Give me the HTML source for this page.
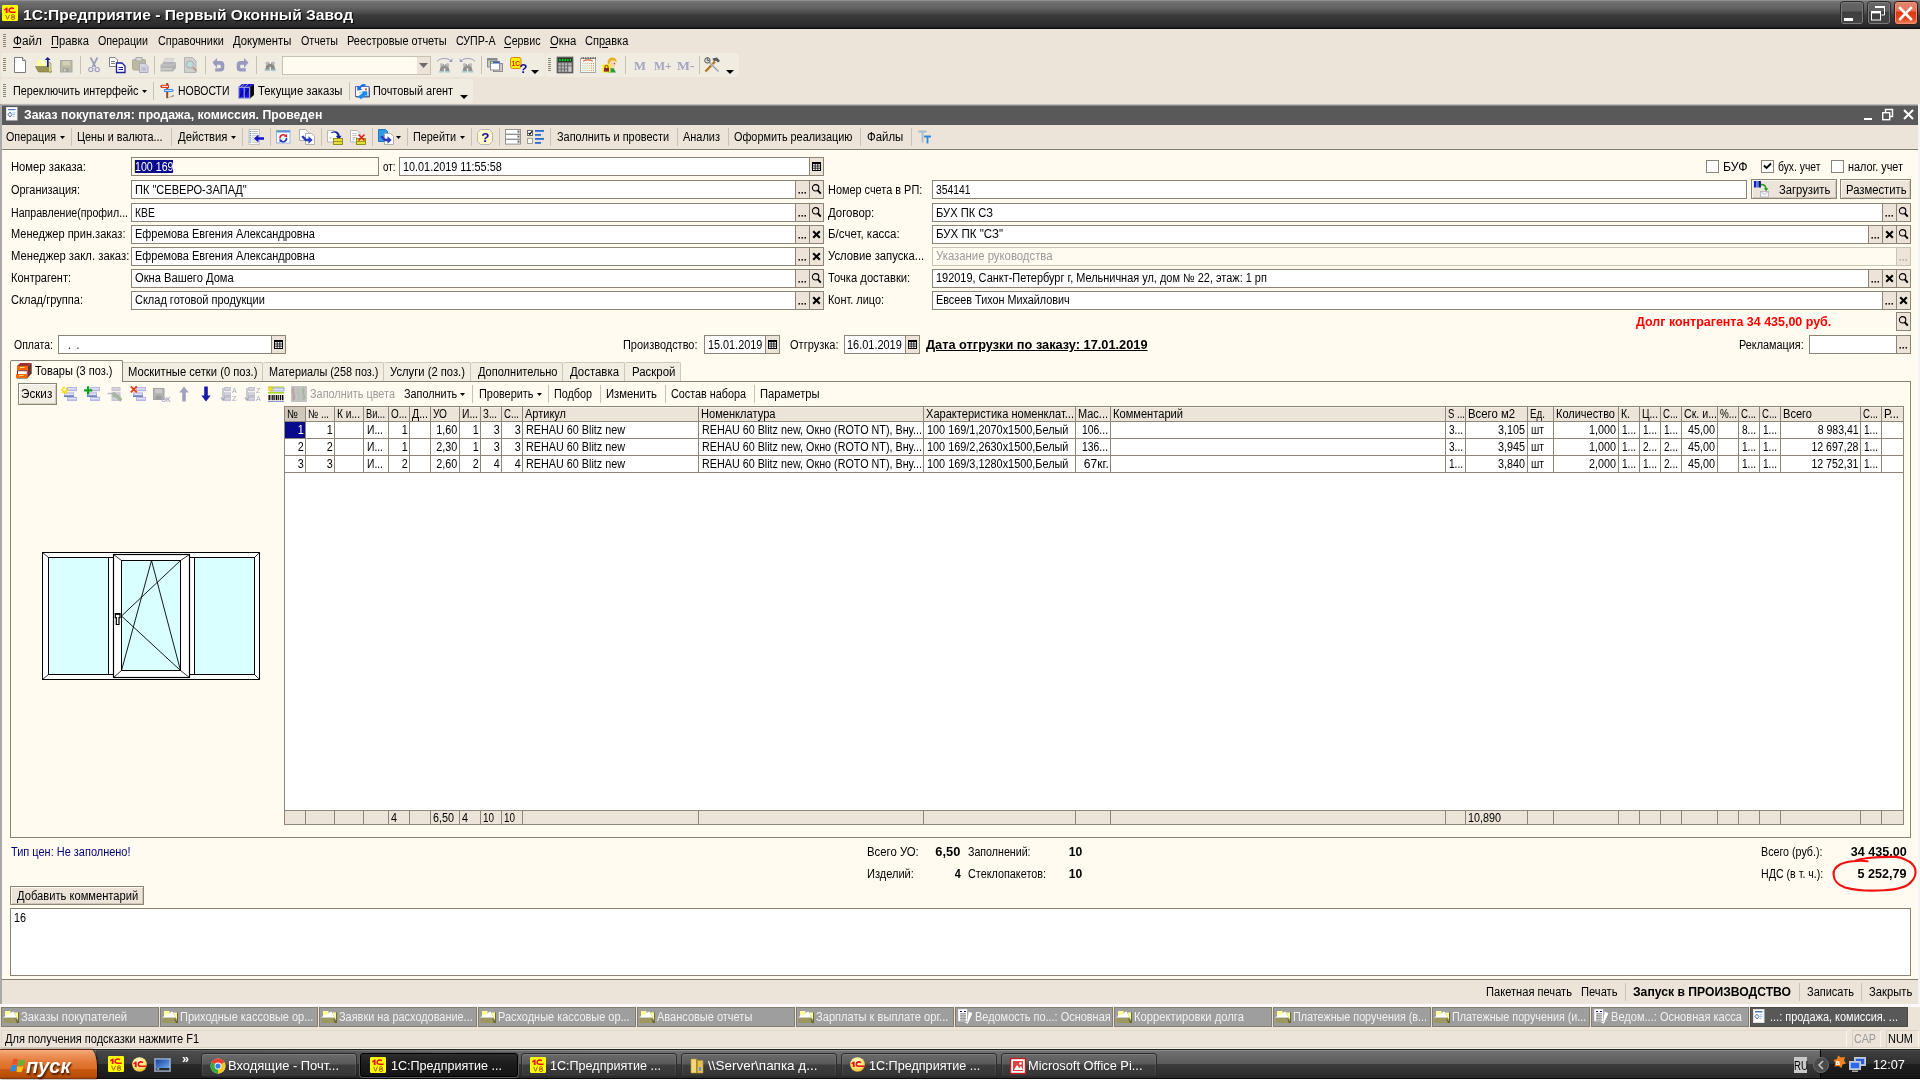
<!DOCTYPE html>
<html><head><meta charset="utf-8"><title>1C</title>
<style>
html,body{margin:0;padding:0;}
body{width:1920px;height:1080px;overflow:hidden;background:#ece4d8;position:relative;font-family:"Liberation Sans",sans-serif;}
#w{position:absolute;left:0;top:0;width:1920px;height:1080px;will-change:transform;}
#w>div,#w>svg,#w>span{position:absolute;}
.t{white-space:pre;display:block;}
svg{overflow:visible;}
</style></head><body><div id="w">
<div style="left:0;top:0;width:1920px;height:28px;background:linear-gradient(#9c9c9c 0,#747474 1.5px,#686868 4px,#626262 8px,#4a4a4a 13px,#3b3b3b 15.5px,#2a2a2a 26px,#1a1a1a 28px);"></div>
<div style="left:0px;top:28px;width:1920px;height:1px;background:#0c0c0c;"></div>
<svg style="left:2px;top:5px" width="16" height="16" viewBox="0 0 16 16"><rect x="0" y="0" width="16" height="16" rx="1.2" fill="#ffff00"/><path d="M2.1 4.300L4.500 2.500H5.600V8H3.700V4.700L2.100 5.400z" fill="#f0101c"/><path d="M12 3.700C9.600 2.300 7.100 3.300 7.100 5.300C7.100 6.800 8.300 7.300 9.800 7.300H13.700" fill="none" stroke="#f0101c" stroke-width="1.500"/><path d="M3.500 9.800L5.500 14.300L7.500 9.800" fill="none" stroke="#b06008" stroke-width="1"/><ellipse cx="11" cy="10.900" rx="1.500" ry="1.200" fill="none" stroke="#b06008" stroke-width="1"/><ellipse cx="11" cy="13.200" rx="1.800" ry="1.300" fill="none" stroke="#b06008" stroke-width="1"/></svg>
<span class="t" style="top:4.5px;font-size:15.5px;line-height:19px;color:#fff;font-weight:bold;left:23px;transform-origin:0 0;transform:scaleX(1.005);text-shadow:1px 1px 1px #000;">1С:Предприятие - Первый Оконный Завод</span>
<div style="left:1840px;top:1px;width:24px;height:24px;border-radius:3.5px;box-sizing:border-box;border:1px solid #2a2a2a;box-shadow:inset 0 0 0 1px #7a7a7a;background:linear-gradient(#666 0,#5e5e5e 9px,#3f3f3f 10px,#444 22px);"></div>
<div style="left:1867px;top:1px;width:24px;height:24px;border-radius:3.5px;box-sizing:border-box;border:1px solid #2a2a2a;box-shadow:inset 0 0 0 1px #7a7a7a;background:linear-gradient(#666 0,#5e5e5e 9px,#3f3f3f 10px,#444 22px);"></div>
<div style="left:1894px;top:1px;width:24px;height:24px;border-radius:3.5px;box-sizing:border-box;border:1px solid #3a1a10;box-shadow:inset 0 0 0 1px #f0907a;background:linear-gradient(#e08a72 0,#df7458 9px,#de3512 10px,#e4451c 17px,#f08a66 22px);"></div>
<div style="left:1844px;top:18px;width:9px;height:3px;background:#fff;"></div>
<svg style="left:1868px;top:3px" width="22" height="22" viewBox="0 0 22 22"><path d="M7.5 4h9v8h-3" fill="none" stroke="#fff" stroke-width="1"/><rect x="7" y="3" width="10" height="2" fill="#fff"/><rect x="3.5" y="9" width="9" height="8" fill="#3f3f3f" stroke="#fff" stroke-width="1"/><rect x="3" y="8" width="10" height="2.4" fill="#fff"/></svg>
<svg style="left:1894px;top:2px" width="23" height="23" viewBox="0 0 23 23"><path d="M5.2 5.2L17.8 18M17.8 5.2L5.2 18" stroke="#fff" stroke-width="2.6"/></svg>
<div style="left:3px;top:34px;width:3px;height:1px;background:#8c8474;"></div>
<div style="left:3px;top:36px;width:3px;height:1px;background:#8c8474;"></div>
<div style="left:3px;top:38px;width:3px;height:1px;background:#8c8474;"></div>
<div style="left:3px;top:40px;width:3px;height:1px;background:#8c8474;"></div>
<div style="left:3px;top:42px;width:3px;height:1px;background:#8c8474;"></div>
<div style="left:3px;top:44px;width:3px;height:1px;background:#8c8474;"></div>
<div style="left:3px;top:46px;width:3px;height:1px;background:#8c8474;"></div>
<span class="t" style="top:33.0px;font-size:12px;line-height:16px;color:#000;left:13px;transform-origin:0 0;transform:scaleX(0.983);">Файл</span>
<span class="t" style="top:33.0px;font-size:12px;line-height:16px;color:#000;left:51.25px;transform-origin:0 0;transform:scaleX(0.937);">Правка</span>
<span class="t" style="top:33.0px;font-size:12px;line-height:16px;color:#000;left:98.25px;transform-origin:0 0;transform:scaleX(0.891);">Операции</span>
<span class="t" style="top:33.0px;font-size:12px;line-height:16px;color:#000;left:157.5px;transform-origin:0 0;transform:scaleX(0.904);">Справочники</span>
<span class="t" style="top:33.0px;font-size:12px;line-height:16px;color:#000;left:233px;transform-origin:0 0;transform:scaleX(0.942);">Документы</span>
<span class="t" style="top:33.0px;font-size:12px;line-height:16px;color:#000;left:300.5px;transform-origin:0 0;transform:scaleX(0.892);">Отчеты</span>
<span class="t" style="top:33.0px;font-size:12px;line-height:16px;color:#000;left:346.5px;transform-origin:0 0;transform:scaleX(0.913);">Реестровые отчеты</span>
<span class="t" style="top:33.0px;font-size:12px;line-height:16px;color:#000;left:455.5px;transform-origin:0 0;transform:scaleX(0.887);">СУПР-А</span>
<span class="t" style="top:33.0px;font-size:12px;line-height:16px;color:#000;left:504.25px;transform-origin:0 0;transform:scaleX(0.888);">Сервис</span>
<span class="t" style="top:33.0px;font-size:12px;line-height:16px;color:#000;left:550px;transform-origin:0 0;transform:scaleX(0.941);">Окна</span>
<span class="t" style="top:33.0px;font-size:12px;line-height:16px;color:#000;left:585px;transform-origin:0 0;transform:scaleX(0.919);">Справка</span>
<div style="left:13px;top:47px;width:8px;height:1px;background:#000;"></div>
<div style="left:51px;top:47px;width:7px;height:1px;background:#000;"></div>
<div style="left:504px;top:47px;width:7px;height:1px;background:#000;"></div>
<div style="left:550px;top:47px;width:7px;height:1px;background:#000;"></div>
<div style="left:602px;top:47px;width:6px;height:1px;background:#000;"></div>
<div style="left:1px;top:53px;width:544px;height:24px;background:#f1ece2;border-radius:3px;"></div>
<div style="left:546px;top:53px;width:193px;height:24px;background:#f1ece2;border-radius:3px;"></div>
<div style="left:3px;top:58px;width:3px;height:1px;background:#8c8474;"></div>
<div style="left:3px;top:60px;width:3px;height:1px;background:#8c8474;"></div>
<div style="left:3px;top:62px;width:3px;height:1px;background:#8c8474;"></div>
<div style="left:3px;top:64px;width:3px;height:1px;background:#8c8474;"></div>
<div style="left:3px;top:66px;width:3px;height:1px;background:#8c8474;"></div>
<div style="left:3px;top:68px;width:3px;height:1px;background:#8c8474;"></div>
<div style="left:3px;top:70px;width:3px;height:1px;background:#8c8474;"></div>
<svg style="left:13px;top:57px" width="14" height="16" viewBox="0 0 14 16"><path d="M1.5 0.5h8l3 3v12h-11z" fill="#fff" stroke="#7d7d7d"/><path d="M9.5 0.5v3h3" fill="#e8e8e8" stroke="#7d7d7d"/></svg>
<svg style="left:35px;top:57px" width="17" height="16" viewBox="0 0 17 16"><path d="M2 3h6l2 2v4H2z" fill="#ffff99"/><path d="M5 3l4 2v3" fill="#fff"/><path d="M0.5 9.5h13l3 5.5H3.5z" fill="#9a9557" stroke="#77733a" stroke-width=".6"/><path d="M13.5 5v9.5l2.5 1V6z" fill="#dcd98a" stroke="#77733a" stroke-width=".5"/><path d="M12 10V3h-2.2L12.7 0l2.9 3H13.6v7z" fill="#1c1c8c"/></svg>
<svg style="left:60px;top:60px" width="13" height="13" viewBox="0 0 13 13"><rect x="0.5" y="0.5" width="11.5" height="11.5" fill="#bdb99e" stroke="#a9a9a9"/><rect x="2.5" y="1" width="7.5" height="4.5" fill="#d3d0b8"/><rect x="3" y="8" width="6" height="4" fill="#a5a5a0"/><rect x="4" y="9" width="1.5" height="2.5" fill="#cfcfc8"/></svg>
<div style="left:80px;top:56px;width:1px;height:18px;background:#c9c1b2;"></div>
<svg style="left:88px;top:57px" width="12" height="16" viewBox="0 0 12 16"><path d="M2.5 0.5L7.5 10M9.5 0.5L4.5 10" stroke="#9c9cb8" stroke-width="1.7" fill="none"/><circle cx="2.8" cy="12.6" r="2.1" fill="none" stroke="#9c9cc4" stroke-width="1.2"/><circle cx="9.2" cy="12.6" r="2.1" fill="none" stroke="#9c9cc4" stroke-width="1.2"/></svg>
<svg style="left:109px;top:57px" width="17" height="16" viewBox="0 0 17 16"><path d="M0.5 0.5h5.5l2.5 2.5v6.5h-8z" fill="#fff" stroke="#808080"/><rect x="2" y="4" width="4" height="1" fill="#808080"/><rect x="2" y="6" width="4" height="1" fill="#808080"/><path d="M7.5 6h5.5l3 3v6.5h-8.5z" fill="#fff" stroke="#1c1c9c" stroke-width="1.3"/><rect x="9.5" y="10" width="4.5" height="1" fill="#1c1c9c"/><rect x="9.5" y="12" width="4.5" height="1" fill="#1c1c9c"/></svg>
<svg style="left:132px;top:57px" width="17" height="16" viewBox="0 0 17 16"><rect x="0.5" y="2.5" width="13" height="10.5" rx="1.5" fill="#bcb99e" stroke="#aeab92"/><rect x="4" y="0.5" width="6" height="3.5" fill="#d8d8d8" stroke="#aaa"/><path d="M7.5 6.5h5.5l3 3v6h-8.5z" fill="#d6d6de" stroke="#a8a8c0"/><rect x="9.5" y="10.5" width="4.5" height="1" fill="#a8a8c0"/><rect x="9.5" y="12.5" width="4.5" height="1" fill="#a8a8c0"/></svg>
<div style="left:154px;top:56px;width:1px;height:18px;background:#c9c1b2;"></div>
<svg style="left:160px;top:57px" width="17" height="16" viewBox="0 0 17 16"><path d="M5 1.5h9l-2 4H3z" fill="#dcdcdc" stroke="#c6c6c6" stroke-width=".6"/><path d="M0.5 8L4 5h12v6l-3 3.5H0.5z" fill="#b3b3b3"/><path d="M0.5 8H13l3-3" fill="none" stroke="#c9c9c9"/><rect x="1" y="11" width="11" height="2" fill="#c9c9c9"/></svg>
<svg style="left:184px;top:57px" width="14" height="16" viewBox="0 0 14 16"><path d="M0.5 0.5h8l3.5 3.5v11.5h-11.5z" fill="#cfcfcf" stroke="#b4b4b4"/><circle cx="6" cy="7.5" r="3.6" fill="#b8dede" stroke="#ababab"/><path d="M9 10.5l3.5 3.5" stroke="#b89a8a" stroke-width="1.8"/></svg>
<div style="left:205px;top:56px;width:1px;height:18px;background:#c9c1b2;"></div>
<svg style="left:212px;top:58px" width="13" height="14" viewBox="0 0 13 14"><path d="M0.5 4.5L5 0v3h3.5a3.8 3.8 0 0 1 3.8 3.8v3a3.8 3.8 0 0 1-3.8 3.8H3.2v-3.4h4.6a1 1 0 0 0 1-1v-1.4a1 1 0 0 0-1-1H5v3.2z" fill="#9a9abe"/></svg>
<svg style="left:236px;top:58px" width="13" height="14" viewBox="0 0 13 14"><g transform="translate(13,0) scale(-1,1)"><path d="M0.5 4.5L5 0v3h3.5a3.8 3.8 0 0 1 3.8 3.8v3a3.8 3.8 0 0 1-3.8 3.8H3.2v-3.4h4.6a1 1 0 0 0 1-1v-1.4a1 1 0 0 0-1-1H5v3.2z" fill="#9a9abe"/></g></svg>
<div style="left:256px;top:56px;width:1px;height:18px;background:#c9c1b2;"></div>
<svg style="left:264px;top:61px" width="12.5" height="10.5" viewBox="0 0 12.5 10.5"><path d="M1 9.5L3 1.5h2.5L5.5 9.5z" fill="#8a8a8a"/><path d="M11.5 9.5L9.5 1.5H7L7 9.5z" fill="#8a8a8a"/><ellipse cx="3.2" cy="2.2" rx="1.6" ry="1.8" fill="#b9b9b9"/><ellipse cx="9.3" cy="2.2" rx="1.6" ry="1.8" fill="#b9b9b9"/><rect x="5" y="3" width="2.5" height="3" fill="#8a8a8a"/><rect x="0.6" y="8.5" width="4.8" height="1.6" fill="#a8cdd2"/><rect x="7.1" y="8.5" width="4.8" height="1.6" fill="#a8cdd2"/></svg>
<div style="left:282px;top:56px;width:149px;height:19px;background:#fffbf0;border:1px solid #c9c1b2;box-sizing:border-box;"></div>
<div style="left:417px;top:57px;width:13px;height:17px;background:#ece4d8;"></div>
<svg style="left:419px;top:63px" width="9" height="5"><path d="M0 0h9L4.5 5z" fill="#6b6b6b"/></svg>
<svg style="left:436px;top:57px" width="17" height="16" viewBox="0 0 17 16"><path d="M1 4.5C4 0.8 11 0.3 15.5 4" fill="none" stroke="#9a9abe" stroke-width="1"/><path d="M16.3 1.6v3.4h-3.4z" fill="#9a9abe"/><g transform="translate(2.3,5.5)"><path d="M1 9.5L3 1.5h2.5L5.5 9.5z" fill="#909090"/><path d="M11.5 9.5L9.5 1.5H7L7 9.5z" fill="#909090"/><ellipse cx="3.2" cy="2.2" rx="1.6" ry="1.8" fill="#bdbdbd"/><ellipse cx="9.3" cy="2.2" rx="1.6" ry="1.8" fill="#bdbdbd"/><rect x="5" y="3" width="2.5" height="3" fill="#909090"/><rect x="0.6" y="8.5" width="4.8" height="1.6" fill="#a8cdd2"/><rect x="7.1" y="8.5" width="4.8" height="1.6" fill="#a8cdd2"/></g></svg>
<svg style="left:459px;top:57px" width="17" height="16" viewBox="0 0 17 16"><g transform="translate(17,0) scale(-1,1)"><path d="M1 4.5C4 0.8 11 0.3 15.5 4" fill="none" stroke="#9a9abe" stroke-width="1"/><path d="M16.3 1.6v3.4h-3.4z" fill="#9a9abe"/></g><g transform="translate(2.3,5.5)"><path d="M1 9.5L3 1.5h2.5L5.5 9.5z" fill="#909090"/><path d="M11.5 9.5L9.5 1.5H7L7 9.5z" fill="#909090"/><ellipse cx="3.2" cy="2.2" rx="1.6" ry="1.8" fill="#bdbdbd"/><ellipse cx="9.3" cy="2.2" rx="1.6" ry="1.8" fill="#bdbdbd"/><rect x="5" y="3" width="2.5" height="3" fill="#909090"/><rect x="0.6" y="8.5" width="4.8" height="1.6" fill="#a8cdd2"/><rect x="7.1" y="8.5" width="4.8" height="1.6" fill="#a8cdd2"/></g></svg>
<div style="left:481px;top:56px;width:1px;height:18px;background:#c9c1b2;"></div>
<svg style="left:487px;top:58px" width="16" height="14" viewBox="0 0 16 14"><rect x="0.5" y="0.5" width="9.5" height="8.5" fill="#c9c9c9" stroke="#8e8e8e"/><rect x="0.5" y="0.5" width="9.5" height="2" fill="#8a8a8a"/><rect x="6.5" y="5.5" width="9" height="8" fill="#c9c9c9" stroke="#8e8e8e"/><rect x="3.5" y="3.5" width="9" height="8.5" fill="#fff" stroke="#8e8e8e"/><rect x="3.5" y="3.5" width="9" height="2" fill="#3a5fb0"/><rect x="4" y="3.7" width="2" height="1.4" fill="#f4e640"/></svg>
<svg style="left:510px;top:57px" width="18" height="16" viewBox="0 0 18 16"><rect x="0.5" y="0.5" width="10.5" height="11" rx="2" fill="#fdf000" stroke="#d88a00" stroke-width="1"/><text x="1.6" y="8.8" font-size="7.5" font-weight="bold" fill="#e0201a" font-family='"Liberation Sans",sans-serif' textLength="8.5" lengthAdjust="spacingAndGlyphs">1C</text><text x="9.5" y="15.5" font-size="13" font-weight="bold" fill="#10109a" font-family='"Liberation Sans",sans-serif'>?</text></svg>
<svg style="left:531px;top:70px" width="8" height="4"><path d="M0 0h8L4 4z" fill="#000"/></svg>
<div style="left:548px;top:58px;width:3px;height:1px;background:#8c8474;"></div>
<div style="left:548px;top:60px;width:3px;height:1px;background:#8c8474;"></div>
<div style="left:548px;top:62px;width:3px;height:1px;background:#8c8474;"></div>
<div style="left:548px;top:64px;width:3px;height:1px;background:#8c8474;"></div>
<div style="left:548px;top:66px;width:3px;height:1px;background:#8c8474;"></div>
<div style="left:548px;top:68px;width:3px;height:1px;background:#8c8474;"></div>
<div style="left:548px;top:70px;width:3px;height:1px;background:#8c8474;"></div>
<svg style="left:557px;top:57px" width="16" height="16" viewBox="0 0 16 16"><rect x="0" y="0" width="16" height="16" fill="#6a6a6a" stroke="#404040" stroke-width=".6"/><rect x="1.2" y="1.2" width="13.6" height="3.6" fill="#101810"/><rect x="1.8" y="1.8" width="0.9" height="2.4" fill="#10f040"/><rect x="3.4000000000000004" y="1.8" width="0.9" height="2.4" fill="#10f040"/><rect x="5.0" y="1.8" width="0.9" height="2.4" fill="#10f040"/><rect x="6.6000000000000005" y="1.8" width="0.9" height="2.4" fill="#10f040"/><rect x="8.200000000000001" y="1.8" width="0.9" height="2.4" fill="#10f040"/><rect x="9.8" y="1.8" width="0.9" height="2.4" fill="#10f040"/><rect x="11.400000000000002" y="1.8" width="0.9" height="2.4" fill="#10f040"/><rect x="13.000000000000002" y="1.8" width="0.9" height="2.4" fill="#10f040"/><rect x="1.5" y="6.2" width="2.2" height="2.2" fill="#b9b9b9"/><rect x="4.7" y="6.2" width="2.2" height="2.2" fill="#b9b9b9"/><rect x="7.9" y="6.2" width="2.2" height="2.2" fill="#b9b9b9"/><rect x="1.5" y="9.4" width="2.2" height="2.2" fill="#b9b9b9"/><rect x="4.7" y="9.4" width="2.2" height="2.2" fill="#b9b9b9"/><rect x="7.9" y="9.4" width="2.2" height="2.2" fill="#b9b9b9"/><rect x="1.5" y="12.600000000000001" width="2.2" height="2.2" fill="#b9b9b9"/><rect x="4.7" y="12.600000000000001" width="2.2" height="2.2" fill="#b9b9b9"/><rect x="7.9" y="12.600000000000001" width="2.2" height="2.2" fill="#b9b9b9"/><rect x="11.3" y="6.2" width="3.2" height="2.2" fill="#b9b9b9"/><rect x="11.3" y="9.4" width="3.2" height="5.4" fill="#c9c9c9"/></svg>
<svg style="left:580px;top:57px" width="16" height="16" viewBox="0 0 16 16"><rect x="0.5" y="1.5" width="15" height="14" fill="#eaffff" stroke="#a9a9a9"/><rect x="1" y="2" width="14" height="2.4" fill="#fff"/><path d="M3 4.2Q8 1.6 13 4.2" stroke="#e86030" stroke-width="1.1" fill="none"/><rect x="1.5" y="0" width="0.8" height="2.2" fill="#555"/><rect x="3.2" y="0" width="0.8" height="2.2" fill="#555"/><rect x="4.9" y="0" width="0.8" height="2.2" fill="#555"/><rect x="6.6" y="0" width="0.8" height="2.2" fill="#555"/><rect x="8.3" y="0" width="0.8" height="2.2" fill="#555"/><rect x="10.0" y="0" width="0.8" height="2.2" fill="#555"/><rect x="11.7" y="0" width="0.8" height="2.2" fill="#555"/><rect x="13.4" y="0" width="0.8" height="2.2" fill="#555"/><rect x="15.1" y="0" width="0.8" height="2.2" fill="#555"/><rect x="2.4" y="6.0" width="1.1" height="1.1" fill="#e0b070"/><rect x="4.5" y="6.0" width="1.1" height="1.1" fill="#e0b070"/><rect x="6.6" y="6.0" width="1.1" height="1.1" fill="#e0b070"/><rect x="8.700000000000001" y="6.0" width="1.1" height="1.1" fill="#e0b070"/><rect x="10.8" y="6.0" width="1.1" height="1.1" fill="#f08030"/><rect x="12.9" y="6.0" width="1.1" height="1.1" fill="#f08030"/><rect x="2.4" y="8.3" width="1.1" height="1.1" fill="#e0b070"/><rect x="4.5" y="8.3" width="1.1" height="1.1" fill="#e0b070"/><rect x="6.6" y="8.3" width="1.1" height="1.1" fill="#e0b070"/><rect x="8.700000000000001" y="8.3" width="1.1" height="1.1" fill="#e0b070"/><rect x="10.8" y="8.3" width="1.1" height="1.1" fill="#f08030"/><rect x="12.9" y="8.3" width="1.1" height="1.1" fill="#f08030"/><rect x="2.4" y="10.6" width="1.1" height="1.1" fill="#e0b070"/><rect x="4.5" y="10.6" width="1.1" height="1.1" fill="#e0b070"/><rect x="6.6" y="10.6" width="1.1" height="1.1" fill="#e0b070"/><rect x="8.700000000000001" y="10.6" width="1.1" height="1.1" fill="#e0b070"/><rect x="10.8" y="10.6" width="1.1" height="1.1" fill="#f08030"/><rect x="12.9" y="10.6" width="1.1" height="1.1" fill="#f08030"/><rect x="2.4" y="12.899999999999999" width="1.1" height="1.1" fill="#e0b070"/><rect x="4.5" y="12.899999999999999" width="1.1" height="1.1" fill="#e0b070"/><rect x="6.6" y="12.899999999999999" width="1.1" height="1.1" fill="#e0b070"/><rect x="8.700000000000001" y="12.899999999999999" width="1.1" height="1.1" fill="#e0b070"/><rect x="10.8" y="12.899999999999999" width="1.1" height="1.1" fill="#f08030"/><rect x="12.9" y="12.899999999999999" width="1.1" height="1.1" fill="#f08030"/></svg>
<svg style="left:602px;top:57px" width="16" height="16" viewBox="0 0 16 16"><path d="M6 15.5Q6 10.5 11 10l3 5.5z" fill="#2c9a4a"/><ellipse cx="10" cy="6.8" rx="3.8" ry="4.6" fill="#f8d8b0"/><path d="M5.5 6Q5.5 0.5 10.5 0.5Q15 0.8 14.6 5.5Q12.6 2.8 9.6 3.4Q7.3 4.5 7 8z" fill="#e8b020"/><rect x="11.8" y="6" width="1" height="1.2" fill="#444"/><rect x="0.5" y="7.5" width="8" height="8" fill="#f4f000"/><rect x="2" y="11" width="5" height="3.6" fill="#8a2040"/><path d="M3 11V9.8a1.5 1.5 0 0 1 3 0V11" stroke="#8a2040" stroke-width="1" fill="none"/></svg>
<div style="left:625px;top:56px;width:1px;height:18px;background:#c9c1b2;"></div>
<span class="t" style="top:57.0px;font-size:13px;line-height:17px;color:#a3a3c2;font-weight:bold;left:633.5px;transform-origin:0 0;transform:scaleX(0.968);font-family:'Liberation Serif',serif;">M</span>
<span class="t" style="top:57.0px;font-size:13px;line-height:17px;color:#a3a3c2;font-weight:bold;left:653.5px;transform-origin:0 0;transform:scaleX(0.896);font-family:'Liberation Serif',serif;">M+</span>
<span class="t" style="top:57.0px;font-size:13px;line-height:17px;color:#a3a3c2;font-weight:bold;left:677px;transform-origin:0 0;transform:scaleX(1.055);font-family:'Liberation Serif',serif;">M-</span>
<div style="left:699px;top:56px;width:1px;height:18px;background:#c9c1b2;"></div>
<svg style="left:704px;top:57px" width="17" height="16" viewBox="0 0 17 16"><path d="M1.5 14.5L11 4.5" stroke="#b87820" stroke-width="2.4"/><path d="M8.5 1.5l4.5-1 3 3.5-2 1.6-2.2-2-2 1z" fill="#5a5a5a"/><path d="M4.5 4.5L14.5 14.5" stroke="#c9c9c9" stroke-width="2.2"/><path d="M4.5 4.5L14.5 14.5" stroke="#8a8a8a" stroke-width=".7"/><circle cx="3.4" cy="3.4" r="2.7" fill="#d9d9d9" stroke="#555" stroke-width="1"/><path d="M3.4 0.5v3h2" stroke="#555" stroke-width=".9" fill="none"/></svg>
<svg style="left:726px;top:70px" width="8" height="4"><path d="M0 0h8L4 4z" fill="#000"/></svg>
<div style="left:1px;top:79px;width:472px;height:24px;background:#f1ece2;border-radius:3px;"></div>
<div style="left:3px;top:84px;width:3px;height:1px;background:#8c8474;"></div>
<div style="left:3px;top:86px;width:3px;height:1px;background:#8c8474;"></div>
<div style="left:3px;top:88px;width:3px;height:1px;background:#8c8474;"></div>
<div style="left:3px;top:90px;width:3px;height:1px;background:#8c8474;"></div>
<div style="left:3px;top:92px;width:3px;height:1px;background:#8c8474;"></div>
<div style="left:3px;top:94px;width:3px;height:1px;background:#8c8474;"></div>
<div style="left:3px;top:96px;width:3px;height:1px;background:#8c8474;"></div>
<span class="t" style="top:83.0px;font-size:12px;line-height:16px;color:#000;left:12.5px;transform-origin:0 0;transform:scaleX(0.902);">Переключить интерфейс</span>
<svg style="left:142px;top:90px" width="5" height="3"><path d="M0 0h5L2.5 3z" fill="#000"/></svg>
<div style="left:153px;top:82px;width:1px;height:18px;background:#c9c1b2;"></div>
<svg style="left:160px;top:83px" width="15" height="16" viewBox="0 0 15 16"><path d="M7.500 15L14 11.500V13.500z" fill="#9a9a9a"/><rect x="6.200" y="0" width="2" height="15.200" fill="#9c4a22"/><path d="M1.500 1.700H9V5H1.500L0 3.300z" fill="#e03c14"/><rect x="2" y="2.800" width="6" height="1.100" fill="#ffe8e0"/><path d="M4 6H12.500L14 7.500L12.500 9H4z" fill="#3c8cf0"/><rect x="5" y="7" width="7.500" height="1" fill="#c4e0ff"/></svg>
<span class="t" style="top:83.0px;font-size:12px;line-height:16px;color:#000;left:177.5px;transform-origin:0 0;transform:scaleX(0.870);">НОВОСТИ</span>
<svg style="left:238px;top:83px" width="16" height="17" viewBox="0 0 16 17"><path d="M0.500 4L4 1H16L12 4z" fill="#1818e0"/><path d="M12 4L16 1V12L12 15.500z" fill="#0a0a0a"/><rect x="0.500" y="4" width="11.500" height="11.500" fill="#1010e8"/><path d="M0.800 4.300H11.700V15.200H0.800zM6.200 4.300V15.200" fill="none" stroke="#c4c8d0" stroke-width=".9"/><path d="M6.200 1.200L2.800 4M10 1.200L6.500 4" stroke="#c4c8d0" stroke-width=".7"/><path d="M1.500 14.500L5 8M7 12L10.500 6" stroke="#000" stroke-width=".6"/></svg>
<span class="t" style="top:83.0px;font-size:12px;line-height:16px;color:#000;left:257.5px;transform-origin:0 0;transform:scaleX(0.942);">Текущие заказы</span>
<div style="left:349px;top:82px;width:1px;height:18px;background:#c9c1b2;"></div>
<svg style="left:355px;top:83px" width="16" height="17" viewBox="0 0 16 17"><rect x="0.500" y="3.500" width="13.500" height="10" fill="#fdfdff" stroke="#6468b8" stroke-width="1"/><path d="M14.500 4.500V14H1" fill="none" stroke="#5a5a6a" stroke-width="1"/><rect x="10" y="5.300" width="2" height="2" fill="#d0642a"/><rect x="4" y="9.300" width="4" height=".8" fill="#b0b0b0"/><path d="M11.500 2.300C9 -0.200 5.500 1.500 4.200 4.200L2.300 2.800L2.300 7.500L7.300 7L5.600 5.400C6.800 3.400 9 2.800 11.500 2.300z" fill="#1a6af0"/><path d="M2.800 13.800L8 9.500L6.700 8.300H12.300V13.600L10.600 12.200L6 16.300z" fill="#1a8cf8"/></svg>
<span class="t" style="top:83.0px;font-size:12px;line-height:16px;color:#000;left:373px;transform-origin:0 0;transform:scaleX(0.910);">Почтовый агент</span>
<svg style="left:460px;top:95px" width="8" height="4"><path d="M0 0h8L4 4z" fill="#000"/></svg>
<div style="left:0px;top:104px;width:1920px;height:1px;background:#b9b9b9;"></div>
<div style="left:0px;top:105px;width:1918px;height:20px;background:#595959;"></div>
<div style="left:0px;top:105px;width:1918px;height:1px;background:#8a8a8a;"></div>
<div style="left:0px;top:104px;width:2px;height:900px;background:#a9a9a9;"></div>
<div style="left:1918px;top:104px;width:2px;height:902px;background:#f4f4f4;"></div>
<svg style="left:6px;top:107px" width="12" height="14" viewBox="0 0 12 14"><rect x="0.5" y="0.5" width="10.5" height="12.5" fill="#fff" stroke="#e8e8e8"/><rect x="2" y="2.2" width="7.5" height="1" fill="#2a5aa8"/><path d="M4 5.2L6 7.6 4 10 2 7.6z" fill="none" stroke="#2a5aa8" stroke-width=".9"/><rect x="6.5" y="5.5" width="3" height=".8" fill="#7ab8e0"/><rect x="6.8" y="7.2" width="2.6" height=".8" fill="#7ab8e0"/><rect x="6.5" y="8.9" width="2" height=".8" fill="#a090d0"/></svg>
<span class="t" style="top:107.0px;font-size:12px;line-height:16px;color:#fff;font-weight:bold;left:24.25px;transform-origin:0 0;transform:scaleX(1.020);">Заказ покупателя: продажа, комиссия. Проведен</span>
<div style="left:1864px;top:118px;width:8px;height:2px;background:#fff;"></div>
<svg style="left:1881px;top:108px" width="13" height="13" viewBox="0 0 13 13"><path d="M4.5 4V1.5h7v7H9" fill="none" stroke="#fff" stroke-width="1.4"/><rect x="1.7" y="4.7" width="7" height="7" fill="#595959" stroke="#fff" stroke-width="1.4"/></svg>
<svg style="left:1903px;top:109px" width="11" height="11" viewBox="0 0 11 11"><path d="M1 1l9 9M10 1l-9 9" stroke="#fff" stroke-width="2"/></svg>
<div style="left:2px;top:125px;width:1916px;height:24px;background:#ece4d8;"></div>
<div style="left:2px;top:149px;width:1916px;height:1px;background:#857d6d;"></div>
<span class="t" style="top:129.0px;font-size:12px;line-height:16px;color:#000;left:6.25px;transform-origin:0 0;transform:scaleX(0.894);">Операция</span>
<svg style="left:60px;top:136px" width="5" height="3"><path d="M0 0h5L2.5 3z" fill="#000"/></svg>
<div style="left:71px;top:128px;width:1px;height:18px;background:#c9c1b2;"></div>
<span class="t" style="top:129.0px;font-size:12px;line-height:16px;color:#000;left:77px;transform-origin:0 0;transform:scaleX(0.901);">Цены и валюта...</span>
<div style="left:171px;top:128px;width:1px;height:18px;background:#c9c1b2;"></div>
<span class="t" style="top:129.0px;font-size:12px;line-height:16px;color:#000;left:178px;transform-origin:0 0;transform:scaleX(0.941);">Действия</span>
<svg style="left:231px;top:136px" width="5" height="3"><path d="M0 0h5L2.5 3z" fill="#000"/></svg>
<div style="left:242px;top:128px;width:1px;height:18px;background:#c9c1b2;"></div>
<svg style="left:248px;top:129px" width="16" height="16" viewBox="0 0 16 16"><rect x="1" y="0.5" width="10.5" height="15" fill="#fff" stroke="#b8b8b8" stroke-width=".8"/><rect x="1.6" y="2.0" width="1.2" height="1.1" fill="#3a78d8"/><rect x="3.6" y="2.2" width="6.5" height=".8" fill="#b0b0b0"/><rect x="1.6" y="4.1" width="1.2" height="1.1" fill="#3a78d8"/><rect x="3.6" y="4.300000000000001" width="6.5" height=".8" fill="#b0b0b0"/><rect x="1.6" y="6.2" width="1.2" height="1.1" fill="#3a78d8"/><rect x="3.6" y="6.4" width="6.5" height=".8" fill="#b0b0b0"/><rect x="1.6" y="8.3" width="1.2" height="1.1" fill="#3a78d8"/><rect x="3.6" y="8.5" width="6.5" height=".8" fill="#b0b0b0"/><rect x="1.6" y="10.4" width="1.2" height="1.1" fill="#3a78d8"/><rect x="3.6" y="10.600000000000001" width="6.5" height=".8" fill="#b0b0b0"/><rect x="1.6" y="12.5" width="1.2" height="1.1" fill="#3a78d8"/><rect x="3.6" y="12.7" width="6.5" height=".8" fill="#b0b0b0"/><path d="M6 9.5L10.5 5.5v2.7H16v2.6h-5.5v2.7z" fill="#1414c8"/></svg>
<div style="left:270px;top:128px;width:1px;height:18px;background:#c9c1b2;"></div>
<svg style="left:276px;top:129px" width="15" height="16" viewBox="0 0 15 16"><rect x="0.5" y="1.5" width="13.5" height="12.5" fill="#fff" stroke="#9ab4d8"/><rect x="0.5" y="1.5" width="13.5" height="2" fill="#5a8cd8"/><rect x="1" y="1.7" width="1.6" height="1.4" fill="#40d040"/><path d="M4 9.5A3.4 3.4 0 0 1 10 7" fill="none" stroke="#d82020" stroke-width="1.6"/><path d="M10.8 5l.3 3.4-3.2-.9z" fill="#d82020"/><path d="M10.5 9A3.4 3.4 0 0 1 4.5 11.5" fill="none" stroke="#1a3cc8" stroke-width="1.6"/><path d="M3.7 13.5l-.3-3.4 3.2.9z" fill="#1a3cc8"/></svg>
<svg style="left:299px;top:129px" width="16" height="16" viewBox="0 0 16 16"><path d="M0.5 0.5h6l3 3v8h-9z" fill="#fff" stroke="#a8a8a8" stroke-width=".9"/><path d="M6.5 4.5h6l3 3v8h-9z" fill="#fff" stroke="#a8a8a8" stroke-width=".9"/><path d="M2.200 7.800L4.200 6.500L7.500 9.800H9.500V7.300L13.700 11L9.500 14.700V12.300H6.300z" fill="#2a3cc0"/></svg>
<div style="left:321px;top:128px;width:1px;height:18px;background:#c9c1b2;"></div>
<svg style="left:327px;top:129px" width="16" height="16" viewBox="0 0 16 16"><path d="M0.5 1.5h6.5l3 3v8.5h-9.5z" fill="#fff" stroke="#b0b0b0" stroke-width=".9"/><circle cx="3.5" cy="9" r="1" fill="#b8c8f0"/><path d="M4 3.5C8 0.8 12.4 2.4 12.8 7l1.9-.3-2.9 3.9L9 6.9l1.8-.1C10.3 4 7.5 2.6 4.5 4.2z" fill="#10209a"/><rect x="6.5" y="9.5" width="9" height="6" fill="#e8e03a" stroke="#8a8420" stroke-width=".9"/><path d="M6.5 12.5h9" stroke="#8a8420" stroke-width=".8"/></svg>
<svg style="left:350px;top:129px" width="16" height="16" viewBox="0 0 16 16"><path d="M0.5 1.5h6.5l3 3v8.5h-9.5z" fill="#fff" stroke="#b0b0b0" stroke-width=".9"/><rect x="2.2" y="4" width="5" height="1" fill="#c8c8c8"/><rect x="2.2" y="6" width="5" height="1" fill="#c8c8c8"/><rect x="2.2" y="8" width="5" height="1" fill="#c8c8c8"/><circle cx="3.5" cy="10" r="1" fill="#b8c8f0"/><rect x="6.5" y="9.5" width="9" height="6" fill="#e8e03a" stroke="#8a8420" stroke-width=".9"/><path d="M6.5 12.5h9" stroke="#8a8420" stroke-width=".8"/><path d="M8.5 5.5l6 6M14.5 5.5l-6 6" stroke="#e01818" stroke-width="1.5"/></svg>
<div style="left:372px;top:128px;width:1px;height:18px;background:#c9c1b2;"></div>
<svg style="left:378px;top:129px" width="16" height="16" viewBox="0 0 16 16"><path d="M0.5 0.5h7l2 2v10h-9z" fill="#2e9ae8" stroke="#1a6ab8" stroke-width=".9"/><path d="M6.5 4.5h6l3 3v8h-9z" fill="#fff" stroke="#a8a8a8" stroke-width=".9"/><path d="M2.200 7.800L4.200 6.500L7.500 9.800H9.500V7.300L13.700 11L9.500 14.700V12.300H6.300z" fill="#2a3cc0"/></svg>
<svg style="left:396px;top:136px" width="5" height="3"><path d="M0 0h5L2.5 3z" fill="#000"/></svg>
<div style="left:407px;top:128px;width:1px;height:18px;background:#c9c1b2;"></div>
<span class="t" style="top:129.0px;font-size:12px;line-height:16px;color:#000;left:413px;transform-origin:0 0;transform:scaleX(0.904);">Перейти</span>
<svg style="left:460px;top:136px" width="5" height="3"><path d="M0 0h5L2.5 3z" fill="#000"/></svg>
<div style="left:471px;top:128px;width:1px;height:18px;background:#c9c1b2;"></div>
<svg style="left:477px;top:129px" width="16" height="16" viewBox="0 0 16 16"><path d="M3.5 0.5h9l3 3v9l-3 3h-9l-3-3v-9z" fill="#fdf7c8" stroke="#b8b8b8"/><text x="4.3" y="13" font-size="13.5" font-weight="bold" fill="#10109a" font-family='"Liberation Sans",sans-serif'>?</text></svg>
<div style="left:499px;top:128px;width:1px;height:18px;background:#c9c1b2;"></div>
<svg style="left:505px;top:129px" width="16" height="16" viewBox="0 0 16 16"><rect x="0.5" y="0.5" width="15" height="4.6" fill="#fff" stroke="#8a8a8a" stroke-width=".9"/><rect x="12" y="1" width="3" height="3.6" fill="#c8c8c8"/><path d="M12.6 2.3h1.8l-.9 1.2z" fill="#333"/><rect x="0.5" y="5.5" width="15" height="4.6" fill="#fff" stroke="#8a8a8a" stroke-width=".9"/><rect x="12" y="6" width="3" height="3.6" fill="#c8c8c8"/><path d="M12.6 7.3h1.8l-.9 1.2z" fill="#333"/><rect x="0.5" y="10.5" width="15" height="4.6" fill="#fff" stroke="#8a8a8a" stroke-width=".9"/><rect x="12" y="11" width="3" height="3.6" fill="#c8c8c8"/><path d="M12.6 12.3h1.8l-.9 1.2z" fill="#333"/></svg>
<svg style="left:527px;top:129px" width="17" height="16" viewBox="0 0 17 16"><rect x="0.5" y="1.5" width="5" height="5" fill="#fff" stroke="#555" stroke-width=".9"/><path d="M1.5 3.8l1.3 1.5 2.2-3" stroke="#000" stroke-width="1.1" fill="none"/><rect x="0.5" y="9.5" width="5" height="5" fill="#fff" stroke="#999" stroke-width=".9"/><rect x="8" y="1" width="9" height="1.8" fill="#2a6ad8"/><rect x="8" y="5" width="6" height="1.8" fill="#2a6ad8"/><rect x="8" y="9" width="9" height="1.8" fill="#2a6ad8"/><rect x="8" y="13" width="6" height="1.8" fill="#2a6ad8"/></svg>
<div style="left:550px;top:128px;width:1px;height:18px;background:#c9c1b2;"></div>
<span class="t" style="top:129.0px;font-size:12px;line-height:16px;color:#000;left:557px;transform-origin:0 0;transform:scaleX(0.909);">Заполнить и провести</span>
<div style="left:677px;top:128px;width:1px;height:18px;background:#c9c1b2;"></div>
<span class="t" style="top:129.0px;font-size:12px;line-height:16px;color:#000;left:683px;transform-origin:0 0;transform:scaleX(0.913);">Анализ</span>
<div style="left:728px;top:128px;width:1px;height:18px;background:#c9c1b2;"></div>
<span class="t" style="top:129.0px;font-size:12px;line-height:16px;color:#000;left:734px;transform-origin:0 0;transform:scaleX(0.904);">Оформить реализацию</span>
<div style="left:860px;top:128px;width:1px;height:18px;background:#c9c1b2;"></div>
<span class="t" style="top:129.0px;font-size:12px;line-height:16px;color:#000;left:866.75px;transform-origin:0 0;transform:scaleX(0.950);">Файлы</span>
<div style="left:911px;top:128px;width:1px;height:18px;background:#c9c1b2;"></div>
<svg style="left:918px;top:130px" width="14" height="14" viewBox="0 0 14 14"><path d="M0.5 1.5h8M4.5 1.5v11" stroke="#a9bccc" stroke-width="1.8" fill="none"/><path d="M6 6.5h7M9.5 6.5v7" stroke="#2a8ad8" stroke-width="1.8" fill="none"/></svg>
<div style="left:2px;top:150px;width:1916px;height:829px;background:#fffbf0;"></div>
<div style="left:2px;top:979px;width:1916px;height:1px;background:#857d6d;"></div>
<span class="t" style="top:159.0px;font-size:12px;line-height:16px;color:#000;left:10.5px;transform-origin:0 0;transform:scaleX(0.937);">Номер заказа:</span>
<span class="t" style="top:182.0px;font-size:12px;line-height:16px;color:#000;left:10.5px;transform-origin:0 0;transform:scaleX(0.911);">Организация:</span>
<span class="t" style="top:205.0px;font-size:12px;line-height:16px;color:#000;left:10.5px;transform-origin:0 0;transform:scaleX(0.884);">Направление(профил...</span>
<span class="t" style="top:226.0px;font-size:12px;line-height:16px;color:#000;left:10.5px;transform-origin:0 0;transform:scaleX(0.920);">Менеджер прин.заказ:</span>
<span class="t" style="top:248.0px;font-size:12px;line-height:16px;color:#000;left:10.5px;transform-origin:0 0;transform:scaleX(0.940);">Менеджер закл. заказ:</span>
<span class="t" style="top:270.0px;font-size:12px;line-height:16px;color:#000;left:10.5px;transform-origin:0 0;transform:scaleX(0.918);">Контрагент:</span>
<span class="t" style="top:292.0px;font-size:12px;line-height:16px;color:#000;left:10.5px;transform-origin:0 0;transform:scaleX(0.923);">Склад/группа:</span>
<div style="left:131px;top:157px;width:248px;height:19px;background:#fff;border:1px solid #8b8475;box-sizing:border-box;"></div>
<div style="left:132px;top:158px;width:246px;height:17px;background:#fffbf0;"></div>
<div style="left:135px;top:160px;width:38px;height:13px;background:#0a0a8c;"></div>
<div style="left:134px;top:160px;width:1px;height:13px;background:#f0e850;"></div>
<span class="t" style="top:159.0px;font-size:12px;line-height:16px;color:#fff;left:134.5px;transform-origin:0 0;transform:scaleX(0.887);">100 169</span>
<span class="t" style="top:159.0px;font-size:12px;line-height:16px;color:#000;left:382.5px;transform-origin:0 0;transform:scaleX(0.820);">от:</span>
<div style="left:399px;top:157px;width:425px;height:19px;background:#fff;border:1px solid #8b8475;box-sizing:border-box;"></div>
<div style="left:810px;top:158px;width:13px;height:17px;background:#ece4d8;"></div>
<div style="left:809px;top:158px;width:1px;height:17px;background:#8b8475;"></div>
<svg style="left:810px;top:158px" width="13" height="17" viewBox="0 0 13 17"><rect x="2.5" y="4.5" width="8" height="8" fill="#fff" stroke="#000" stroke-width="1"/><rect x="2.5" y="4.5" width="8" height="1.6" fill="#000"/><path d="M2.5 8h8M2.5 10.2h8M5.2 6v6.5M7.8 6v6.5" stroke="#000" stroke-width=".8"/></svg>
<span class="t" style="top:159.0px;font-size:12px;line-height:16px;color:#000;left:402.5px;transform-origin:0 0;transform:scaleX(0.904);">10.01.2019 11:55:58</span>
<div style="left:131px;top:180px;width:693px;height:19px;background:#fff;border:1px solid #8b8475;box-sizing:border-box;"></div>
<div style="left:810px;top:181px;width:13px;height:17px;background:#ece4d8;"></div>
<div style="left:809px;top:181px;width:1px;height:17px;background:#8b8475;"></div>
<svg style="left:810px;top:181px" width="13" height="17" viewBox="0 0 13 17"><circle cx="5.6" cy="6.8" r="3.2" fill="none" stroke="#000" stroke-width="1.1"/><path d="M7.8 9.4l3 3.2" stroke="#000" stroke-width="2"/></svg>
<div style="left:796px;top:181px;width:13px;height:17px;background:#ece4d8;"></div>
<div style="left:795px;top:181px;width:1px;height:17px;background:#8b8475;"></div>
<svg style="left:796px;top:181px" width="13" height="17" viewBox="0 0 13 17"><rect x="2.5" y="11" width="1.4" height="1.6" fill="#000"/><rect x="5.5" y="11" width="1.4" height="1.6" fill="#000"/><rect x="8.5" y="11" width="1.4" height="1.6" fill="#000"/></svg>
<span class="t" style="top:182.0px;font-size:12px;line-height:16px;color:#000;left:134.5px;transform-origin:0 0;transform:scaleX(0.920);">ПК &quot;СЕВЕРО-ЗАПАД&quot;</span>
<div style="left:131px;top:203px;width:693px;height:19px;background:#fff;border:1px solid #8b8475;box-sizing:border-box;"></div>
<div style="left:810px;top:204px;width:13px;height:17px;background:#ece4d8;"></div>
<div style="left:809px;top:204px;width:1px;height:17px;background:#8b8475;"></div>
<svg style="left:810px;top:204px" width="13" height="17" viewBox="0 0 13 17"><circle cx="5.6" cy="6.8" r="3.2" fill="none" stroke="#000" stroke-width="1.1"/><path d="M7.8 9.4l3 3.2" stroke="#000" stroke-width="2"/></svg>
<div style="left:796px;top:204px;width:13px;height:17px;background:#ece4d8;"></div>
<div style="left:795px;top:204px;width:1px;height:17px;background:#8b8475;"></div>
<svg style="left:796px;top:204px" width="13" height="17" viewBox="0 0 13 17"><rect x="2.5" y="11" width="1.4" height="1.6" fill="#000"/><rect x="5.5" y="11" width="1.4" height="1.6" fill="#000"/><rect x="8.5" y="11" width="1.4" height="1.6" fill="#000"/></svg>
<span class="t" style="top:205.0px;font-size:12px;line-height:16px;color:#000;left:134.5px;transform-origin:0 0;transform:scaleX(0.859);">КВЕ</span>
<div style="left:131px;top:225px;width:693px;height:19px;background:#fff;border:1px solid #8b8475;box-sizing:border-box;"></div>
<div style="left:810px;top:226px;width:13px;height:17px;background:#ece4d8;"></div>
<div style="left:809px;top:226px;width:1px;height:17px;background:#8b8475;"></div>
<svg style="left:810px;top:226px" width="13" height="17" viewBox="0 0 13 17"><path d="M3.2 5.200l6.600 6.600M9.800 5.200l-6.600 6.600" stroke="#000" stroke-width="2.100"/></svg>
<div style="left:796px;top:226px;width:13px;height:17px;background:#ece4d8;"></div>
<div style="left:795px;top:226px;width:1px;height:17px;background:#8b8475;"></div>
<svg style="left:796px;top:226px" width="13" height="17" viewBox="0 0 13 17"><rect x="2.5" y="11" width="1.4" height="1.6" fill="#000"/><rect x="5.5" y="11" width="1.4" height="1.6" fill="#000"/><rect x="8.5" y="11" width="1.4" height="1.6" fill="#000"/></svg>
<span class="t" style="top:226.0px;font-size:12px;line-height:16px;color:#000;left:134.5px;transform-origin:0 0;transform:scaleX(0.912);">Ефремова Евгения Александровна</span>
<div style="left:131px;top:247px;width:693px;height:19px;background:#fff;border:1px solid #8b8475;box-sizing:border-box;"></div>
<div style="left:810px;top:248px;width:13px;height:17px;background:#ece4d8;"></div>
<div style="left:809px;top:248px;width:1px;height:17px;background:#8b8475;"></div>
<svg style="left:810px;top:248px" width="13" height="17" viewBox="0 0 13 17"><path d="M3.2 5.200l6.600 6.600M9.800 5.200l-6.600 6.600" stroke="#000" stroke-width="2.100"/></svg>
<div style="left:796px;top:248px;width:13px;height:17px;background:#ece4d8;"></div>
<div style="left:795px;top:248px;width:1px;height:17px;background:#8b8475;"></div>
<svg style="left:796px;top:248px" width="13" height="17" viewBox="0 0 13 17"><rect x="2.5" y="11" width="1.4" height="1.6" fill="#000"/><rect x="5.5" y="11" width="1.4" height="1.6" fill="#000"/><rect x="8.5" y="11" width="1.4" height="1.6" fill="#000"/></svg>
<span class="t" style="top:248.0px;font-size:12px;line-height:16px;color:#000;left:134.5px;transform-origin:0 0;transform:scaleX(0.912);">Ефремова Евгения Александровна</span>
<div style="left:131px;top:269px;width:693px;height:19px;background:#fff;border:1px solid #8b8475;box-sizing:border-box;"></div>
<div style="left:810px;top:270px;width:13px;height:17px;background:#ece4d8;"></div>
<div style="left:809px;top:270px;width:1px;height:17px;background:#8b8475;"></div>
<svg style="left:810px;top:270px" width="13" height="17" viewBox="0 0 13 17"><circle cx="5.6" cy="6.8" r="3.2" fill="none" stroke="#000" stroke-width="1.1"/><path d="M7.8 9.4l3 3.2" stroke="#000" stroke-width="2"/></svg>
<div style="left:796px;top:270px;width:13px;height:17px;background:#ece4d8;"></div>
<div style="left:795px;top:270px;width:1px;height:17px;background:#8b8475;"></div>
<svg style="left:796px;top:270px" width="13" height="17" viewBox="0 0 13 17"><rect x="2.5" y="11" width="1.4" height="1.6" fill="#000"/><rect x="5.5" y="11" width="1.4" height="1.6" fill="#000"/><rect x="8.5" y="11" width="1.4" height="1.6" fill="#000"/></svg>
<span class="t" style="top:270.0px;font-size:12px;line-height:16px;color:#000;left:134.5px;transform-origin:0 0;transform:scaleX(0.930);">Окна Вашего Дома</span>
<div style="left:131px;top:291px;width:693px;height:19px;background:#fff;border:1px solid #8b8475;box-sizing:border-box;"></div>
<div style="left:810px;top:292px;width:13px;height:17px;background:#ece4d8;"></div>
<div style="left:809px;top:292px;width:1px;height:17px;background:#8b8475;"></div>
<svg style="left:810px;top:292px" width="13" height="17" viewBox="0 0 13 17"><path d="M3.2 5.200l6.600 6.600M9.800 5.200l-6.600 6.600" stroke="#000" stroke-width="2.100"/></svg>
<div style="left:796px;top:292px;width:13px;height:17px;background:#ece4d8;"></div>
<div style="left:795px;top:292px;width:1px;height:17px;background:#8b8475;"></div>
<svg style="left:796px;top:292px" width="13" height="17" viewBox="0 0 13 17"><rect x="2.5" y="11" width="1.4" height="1.6" fill="#000"/><rect x="5.5" y="11" width="1.4" height="1.6" fill="#000"/><rect x="8.5" y="11" width="1.4" height="1.6" fill="#000"/></svg>
<span class="t" style="top:292.0px;font-size:12px;line-height:16px;color:#000;left:134.5px;transform-origin:0 0;transform:scaleX(0.916);">Склад готовой продукции</span>
<span class="t" style="top:182.0px;font-size:12px;line-height:16px;color:#000;left:828.25px;transform-origin:0 0;transform:scaleX(0.909);">Номер счета в РП:</span>
<span class="t" style="top:205.0px;font-size:12px;line-height:16px;color:#000;left:828.25px;transform-origin:0 0;transform:scaleX(0.951);">Договор:</span>
<span class="t" style="top:226.0px;font-size:12px;line-height:16px;color:#000;left:828.25px;transform-origin:0 0;transform:scaleX(0.961);">Б/счет, касса:</span>
<span class="t" style="top:248.0px;font-size:12px;line-height:16px;color:#000;left:828.25px;transform-origin:0 0;transform:scaleX(0.939);">Условие запуска...</span>
<span class="t" style="top:270.0px;font-size:12px;line-height:16px;color:#000;left:828.25px;transform-origin:0 0;transform:scaleX(0.935);">Точка доставки:</span>
<span class="t" style="top:292.0px;font-size:12px;line-height:16px;color:#000;left:828.25px;transform-origin:0 0;transform:scaleX(0.909);">Конт. лицо:</span>
<div style="left:932px;top:180px;width:815px;height:19px;background:#fff;border:1px solid #8b8475;box-sizing:border-box;"></div>
<span class="t" style="top:182.0px;font-size:12px;line-height:16px;color:#000;left:935.5px;transform-origin:0 0;transform:scaleX(0.861);">354141</span>
<div style="left:932px;top:203px;width:979px;height:19px;background:#fff;border:1px solid #8b8475;box-sizing:border-box;"></div>
<div style="left:1897px;top:204px;width:13px;height:17px;background:#ece4d8;"></div>
<div style="left:1896px;top:204px;width:1px;height:17px;background:#8b8475;"></div>
<svg style="left:1897px;top:204px" width="13" height="17" viewBox="0 0 13 17"><circle cx="5.6" cy="6.8" r="3.2" fill="none" stroke="#000" stroke-width="1.1"/><path d="M7.8 9.4l3 3.2" stroke="#000" stroke-width="2"/></svg>
<div style="left:1883px;top:204px;width:13px;height:17px;background:#ece4d8;"></div>
<div style="left:1882px;top:204px;width:1px;height:17px;background:#8b8475;"></div>
<svg style="left:1883px;top:204px" width="13" height="17" viewBox="0 0 13 17"><rect x="2.5" y="11" width="1.4" height="1.6" fill="#000"/><rect x="5.5" y="11" width="1.4" height="1.6" fill="#000"/><rect x="8.5" y="11" width="1.4" height="1.6" fill="#000"/></svg>
<span class="t" style="top:205.0px;font-size:12px;line-height:16px;color:#000;left:935.5px;transform-origin:0 0;transform:scaleX(0.930);">БУХ ПК СЗ</span>
<div style="left:932px;top:225px;width:979px;height:19px;background:#fff;border:1px solid #8b8475;box-sizing:border-box;"></div>
<div style="left:1897px;top:226px;width:13px;height:17px;background:#ece4d8;"></div>
<div style="left:1896px;top:226px;width:1px;height:17px;background:#8b8475;"></div>
<svg style="left:1897px;top:226px" width="13" height="17" viewBox="0 0 13 17"><circle cx="5.6" cy="6.8" r="3.2" fill="none" stroke="#000" stroke-width="1.1"/><path d="M7.8 9.4l3 3.2" stroke="#000" stroke-width="2"/></svg>
<div style="left:1883px;top:226px;width:13px;height:17px;background:#ece4d8;"></div>
<div style="left:1882px;top:226px;width:1px;height:17px;background:#8b8475;"></div>
<svg style="left:1883px;top:226px" width="13" height="17" viewBox="0 0 13 17"><path d="M3.2 5.200l6.600 6.600M9.800 5.200l-6.600 6.600" stroke="#000" stroke-width="2.100"/></svg>
<div style="left:1869px;top:226px;width:13px;height:17px;background:#ece4d8;"></div>
<div style="left:1868px;top:226px;width:1px;height:17px;background:#8b8475;"></div>
<svg style="left:1869px;top:226px" width="13" height="17" viewBox="0 0 13 17"><rect x="2.5" y="11" width="1.4" height="1.6" fill="#000"/><rect x="5.5" y="11" width="1.4" height="1.6" fill="#000"/><rect x="8.5" y="11" width="1.4" height="1.6" fill="#000"/></svg>
<span class="t" style="top:226.0px;font-size:12px;line-height:16px;color:#000;left:935.5px;transform-origin:0 0;transform:scaleX(0.960);">БУХ ПК &quot;СЗ&quot;</span>
<div style="left:932px;top:247px;width:979px;height:19px;background:#fffbf0;border:1px solid #c9c3b5;box-sizing:border-box;"></div>
<div style="left:1897px;top:248px;width:13px;height:17px;background:#ece4d8;"></div>
<div style="left:1896px;top:248px;width:1px;height:17px;background:#c9c3b5;"></div>
<svg style="left:1897px;top:248px" width="13" height="17" viewBox="0 0 13 17"><rect x="2.5" y="11" width="1.4" height="1.6" fill="#a9a9a9"/><rect x="5.5" y="11" width="1.4" height="1.6" fill="#a9a9a9"/><rect x="8.5" y="11" width="1.4" height="1.6" fill="#a9a9a9"/></svg>
<span class="t" style="top:248.0px;font-size:12px;line-height:16px;color:#9a9a9a;left:935.5px;transform-origin:0 0;transform:scaleX(0.945);">Указание руководства</span>
<div style="left:932px;top:269px;width:979px;height:19px;background:#fff;border:1px solid #8b8475;box-sizing:border-box;"></div>
<div style="left:1897px;top:270px;width:13px;height:17px;background:#ece4d8;"></div>
<div style="left:1896px;top:270px;width:1px;height:17px;background:#8b8475;"></div>
<svg style="left:1897px;top:270px" width="13" height="17" viewBox="0 0 13 17"><circle cx="5.6" cy="6.8" r="3.2" fill="none" stroke="#000" stroke-width="1.1"/><path d="M7.8 9.4l3 3.2" stroke="#000" stroke-width="2"/></svg>
<div style="left:1883px;top:270px;width:13px;height:17px;background:#ece4d8;"></div>
<div style="left:1882px;top:270px;width:1px;height:17px;background:#8b8475;"></div>
<svg style="left:1883px;top:270px" width="13" height="17" viewBox="0 0 13 17"><path d="M3.2 5.200l6.600 6.600M9.800 5.200l-6.600 6.600" stroke="#000" stroke-width="2.100"/></svg>
<div style="left:1869px;top:270px;width:13px;height:17px;background:#ece4d8;"></div>
<div style="left:1868px;top:270px;width:1px;height:17px;background:#8b8475;"></div>
<svg style="left:1869px;top:270px" width="13" height="17" viewBox="0 0 13 17"><rect x="2.5" y="11" width="1.4" height="1.6" fill="#000"/><rect x="5.5" y="11" width="1.4" height="1.6" fill="#000"/><rect x="8.5" y="11" width="1.4" height="1.6" fill="#000"/></svg>
<span class="t" style="top:270.0px;font-size:12px;line-height:16px;color:#000;left:935.5px;transform-origin:0 0;transform:scaleX(0.912);">192019, Санкт-Петербург г, Мельничная ул, дом № 22, этаж: 1 рп</span>
<div style="left:932px;top:291px;width:979px;height:19px;background:#fff;border:1px solid #8b8475;box-sizing:border-box;"></div>
<div style="left:1897px;top:292px;width:13px;height:17px;background:#ece4d8;"></div>
<div style="left:1896px;top:292px;width:1px;height:17px;background:#8b8475;"></div>
<svg style="left:1897px;top:292px" width="13" height="17" viewBox="0 0 13 17"><path d="M3.2 5.200l6.600 6.600M9.800 5.200l-6.600 6.600" stroke="#000" stroke-width="2.100"/></svg>
<div style="left:1883px;top:292px;width:13px;height:17px;background:#ece4d8;"></div>
<div style="left:1882px;top:292px;width:1px;height:17px;background:#8b8475;"></div>
<svg style="left:1883px;top:292px" width="13" height="17" viewBox="0 0 13 17"><rect x="2.5" y="11" width="1.4" height="1.6" fill="#000"/><rect x="5.5" y="11" width="1.4" height="1.6" fill="#000"/><rect x="8.5" y="11" width="1.4" height="1.6" fill="#000"/></svg>
<span class="t" style="top:292.0px;font-size:12px;line-height:16px;color:#000;left:935.5px;transform-origin:0 0;transform:scaleX(0.901);">Евсеев Тихон Михайлович</span>
<div style="left:1706px;top:160px;width:13px;height:13px;background:#fff;border:1px solid #8b8475;box-sizing:border-box;"></div>
<span class="t" style="top:159.0px;font-size:12px;line-height:16px;color:#000;left:1722.5px;transform-origin:0 0;transform:scaleX(1.023);">БУФ</span>
<div style="left:1761px;top:160px;width:13px;height:13px;background:#fff;border:1px solid #8b8475;box-sizing:border-box;"></div>
<svg style="left:1763px;top:162px" width="9" height="9" viewBox="0 0 9 9"><path d="M1 3.5L3.5 6L8 1.5" fill="none" stroke="#000" stroke-width="1.8"/></svg>
<span class="t" style="top:159.0px;font-size:12px;line-height:16px;color:#000;left:1777.5px;transform-origin:0 0;transform:scaleX(0.862);">бух. учет</span>
<div style="left:1831px;top:160px;width:13px;height:13px;background:#fff;border:1px solid #8b8475;box-sizing:border-box;"></div>
<span class="t" style="top:159.0px;font-size:12px;line-height:16px;color:#000;left:1847.5px;transform-origin:0 0;transform:scaleX(0.906);">налог. учет</span>
<div style="left:1751px;top:179px;width:86px;height:20px;box-sizing:border-box;background:#ece4d8;border:1px solid #8b8475;box-shadow:inset 1px 1px 0 #fbf8f1,inset -1px -1px 0 #cfc7b8;"></div>
<svg style="left:1754px;top:181px" width="16" height="17" viewBox="0 0 16 17"><rect x="0" y="0" width="2.3" height="6.5" fill="#1a1ad0"/><rect x="2.3" y="0" width="2.3" height="6.5" fill="#3a8ae0"/><rect x="4.6" y="0" width="2.3" height="6.5" fill="#10106a"/><path d="M7 3.5c3 0 5 1.5 5 4.5" stroke="#18a020" stroke-width="1.4" fill="none"/><path d="M9.8 7.2h4.6l-2.3 3z" fill="#18a020"/><rect x="6.5" y="10.5" width="8" height="5.5" fill="#f4f4f8" stroke="#b0b0c0" stroke-width=".8"/><path d="M6.5 10.5l4 3 4-3" fill="none" stroke="#b0b0c0" stroke-width=".7"/></svg>
<span class="t" style="top:181.5px;font-size:12px;line-height:16px;color:#000;left:1778.75px;transform-origin:0 0;transform:scaleX(0.935);">Загрузить</span>
<div style="left:1840px;top:179px;width:71px;height:20px;box-sizing:border-box;background:#ece4d8;border:1px solid #8b8475;box-shadow:inset 1px 1px 0 #fbf8f1,inset -1px -1px 0 #cfc7b8;"></div>
<span class="t" style="top:181.5px;font-size:12px;line-height:16px;color:#000;left:1845.5px;transform-origin:0 0;transform:scaleX(0.938);">Разместить</span>
<span class="t" style="top:314.0px;font-size:12px;line-height:16px;color:#ff0000;font-weight:bold;left:1635.75px;transform-origin:0 0;transform:scaleX(1.038);">Долг контрагента 34 435,00 руб.</span>
<div style="left:1896px;top:312px;width:15px;height:19px;background:#ece4d8;border:1px solid #8b8475;box-sizing:border-box;"></div>
<svg style="left:1897px;top:313px" width="13" height="17" viewBox="0 0 13 17"><circle cx="5.6" cy="6.8" r="3.2" fill="none" stroke="#000" stroke-width="1.1"/><path d="M7.8 9.4l3 3.2" stroke="#000" stroke-width="2"/></svg>
<span class="t" style="top:337.0px;font-size:12px;line-height:16px;color:#000;left:14.25px;transform-origin:0 0;transform:scaleX(0.874);">Оплата:</span>
<div style="left:58px;top:335px;width:228px;height:19px;background:#fff;border:1px solid #8b8475;box-sizing:border-box;"></div>
<div style="left:272px;top:336px;width:13px;height:17px;background:#ece4d8;"></div>
<div style="left:271px;top:336px;width:1px;height:17px;background:#8b8475;"></div>
<svg style="left:272px;top:336px" width="13" height="17" viewBox="0 0 13 17"><rect x="2.5" y="4.5" width="8" height="8" fill="#fff" stroke="#000" stroke-width="1"/><rect x="2.5" y="4.5" width="8" height="1.6" fill="#000"/><path d="M2.5 8h8M2.5 10.2h8M5.2 6v6.5M7.8 6v6.5" stroke="#000" stroke-width=".8"/></svg>
<span class="t" style="top:337.0px;font-size:12px;line-height:16px;color:#000;left:67.5px;transform-origin:0 0;transform:scaleX(0.843);">.  .</span>
<span class="t" style="top:337.0px;font-size:12px;line-height:16px;color:#000;left:622.5px;transform-origin:0 0;transform:scaleX(0.913);">Производство:</span>
<div style="left:704px;top:335px;width:76px;height:19px;background:#fff;border:1px solid #8b8475;box-sizing:border-box;"></div>
<div style="left:766px;top:336px;width:13px;height:17px;background:#ece4d8;"></div>
<div style="left:765px;top:336px;width:1px;height:17px;background:#8b8475;"></div>
<svg style="left:766px;top:336px" width="13" height="17" viewBox="0 0 13 17"><rect x="2.5" y="4.5" width="8" height="8" fill="#fff" stroke="#000" stroke-width="1"/><rect x="2.5" y="4.5" width="8" height="1.6" fill="#000"/><path d="M2.5 8h8M2.5 10.2h8M5.2 6v6.5M7.8 6v6.5" stroke="#000" stroke-width=".8"/></svg>
<span class="t" style="top:337.0px;font-size:12px;line-height:16px;color:#000;left:707.5px;transform-origin:0 0;transform:scaleX(0.903);">15.01.2019</span>
<span class="t" style="top:337.0px;font-size:12px;line-height:16px;color:#000;left:789.5px;transform-origin:0 0;transform:scaleX(0.919);">Отгрузка:</span>
<div style="left:844px;top:335px;width:76px;height:19px;background:#fff;border:1px solid #8b8475;box-sizing:border-box;"></div>
<div style="left:906px;top:336px;width:13px;height:17px;background:#ece4d8;"></div>
<div style="left:905px;top:336px;width:1px;height:17px;background:#8b8475;"></div>
<svg style="left:906px;top:336px" width="13" height="17" viewBox="0 0 13 17"><rect x="2.5" y="4.5" width="8" height="8" fill="#fff" stroke="#000" stroke-width="1"/><rect x="2.5" y="4.5" width="8" height="1.6" fill="#000"/><path d="M2.5 8h8M2.5 10.2h8M5.2 6v6.5M7.8 6v6.5" stroke="#000" stroke-width=".8"/></svg>
<span class="t" style="top:337.0px;font-size:12px;line-height:16px;color:#000;left:847px;transform-origin:0 0;transform:scaleX(0.912);">16.01.2019</span>
<span class="t" style="top:337.0px;font-size:12px;line-height:16px;color:#000;font-weight:bold;text-decoration:underline;left:925.5px;transform-origin:0 0;transform:scaleX(1.064);">Дата отгрузки по заказу: 17.01.2019</span>
<span class="t" style="top:337.0px;font-size:12px;line-height:16px;color:#000;left:1739.25px;transform-origin:0 0;transform:scaleX(0.905);">Рекламация:</span>
<div style="left:1809px;top:335px;width:102px;height:19px;background:#fff;border:1px solid #8b8475;box-sizing:border-box;"></div>
<div style="left:1897px;top:336px;width:13px;height:17px;background:#ece4d8;"></div>
<div style="left:1896px;top:336px;width:1px;height:17px;background:#8b8475;"></div>
<svg style="left:1897px;top:336px" width="13" height="17" viewBox="0 0 13 17"><rect x="2.5" y="11" width="1.4" height="1.6" fill="#000"/><rect x="5.5" y="11" width="1.4" height="1.6" fill="#000"/><rect x="8.5" y="11" width="1.4" height="1.6" fill="#000"/></svg>
<div style="left:10px;top:381px;width:1901px;height:457px;border:1px solid #8b8475;box-sizing:border-box;"></div>
<div style="left:122px;top:362px;width:141px;height:19px;box-sizing:border-box;background:#f3eee2;border:1px solid #cfc8b8;border-bottom:none;border-left:none;border-radius:2px 2px 0 0;"></div>
<span class="t" style="top:363.5px;font-size:12px;line-height:16px;color:#000;left:128px;transform-origin:0 0;transform:scaleX(0.935);">Москитные сетки (0 поз.)</span>
<div style="left:263px;top:362px;width:121px;height:19px;box-sizing:border-box;background:#f3eee2;border:1px solid #cfc8b8;border-bottom:none;border-left:none;border-radius:2px 2px 0 0;"></div>
<span class="t" style="top:363.5px;font-size:12px;line-height:16px;color:#000;left:269px;transform-origin:0 0;transform:scaleX(0.906);">Материалы (258 поз.)</span>
<div style="left:384px;top:362px;width:87px;height:19px;box-sizing:border-box;background:#f3eee2;border:1px solid #cfc8b8;border-bottom:none;border-left:none;border-radius:2px 2px 0 0;"></div>
<span class="t" style="top:363.5px;font-size:12px;line-height:16px;color:#000;left:390px;transform-origin:0 0;transform:scaleX(0.936);">Услуги (2 поз.)</span>
<div style="left:471px;top:362px;width:92px;height:19px;box-sizing:border-box;background:#f3eee2;border:1px solid #cfc8b8;border-bottom:none;border-left:none;border-radius:2px 2px 0 0;"></div>
<span class="t" style="top:363.5px;font-size:12px;line-height:16px;color:#000;left:477.5px;transform-origin:0 0;transform:scaleX(0.920);">Дополнительно</span>
<div style="left:563px;top:362px;width:62px;height:19px;box-sizing:border-box;background:#f3eee2;border:1px solid #cfc8b8;border-bottom:none;border-left:none;border-radius:2px 2px 0 0;"></div>
<span class="t" style="top:363.5px;font-size:12px;line-height:16px;color:#000;left:570px;transform-origin:0 0;transform:scaleX(0.951);">Доставка</span>
<div style="left:625px;top:362px;width:56px;height:19px;box-sizing:border-box;background:#f3eee2;border:1px solid #cfc8b8;border-bottom:none;border-left:none;border-radius:2px 2px 0 0;"></div>
<span class="t" style="top:363.5px;font-size:12px;line-height:16px;color:#000;left:631.5px;transform-origin:0 0;transform:scaleX(0.954);">Раскрой</span>
<div style="left:10px;top:360px;width:113px;height:22px;box-sizing:border-box;background:#fffbf0;border:1px solid #8b8475;border-bottom:none;border-radius:2px 2px 0 0;"></div>
<svg style="left:16px;top:363px" width="16" height="16" viewBox="0 0 16 16"><path d="M1 3L4.200 0H15.700L12 3z" fill="#9c3030"/><path d="M12 3L15.700 0V10.500L11.500 15H11z" fill="#6a3232"/><rect x="1" y="3" width="11" height="4.200" fill="#ff6a00"/><rect x="4" y="4.200" width="4.600" height="1" fill="#fff8a0"/><rect x="5" y="5.200" width="4.600" height=".6" fill="#d04000"/><rect x="1" y="7.200" width="10.500" height="3.800" fill="#8a2020"/><rect x="2" y="8.200" width="8.800" height="2.800" fill="#fff"/><rect x="0" y="11" width="11.300" height="4.200" fill="#ff6a00"/><rect x="3" y="12.300" width="4.600" height="1" fill="#fff8a0"/><rect x="4" y="13.300" width="4.600" height=".6" fill="#d04000"/><rect x="1" y="15.200" width="10.500" height=".8" fill="#7a8a9a"/></svg>
<span class="t" style="top:362.5px;font-size:12px;line-height:16px;color:#000;left:35px;transform-origin:0 0;transform:scaleX(0.917);">Товары (3 поз.)</span>
<div style="left:18px;top:383px;width:39px;height:22px;box-sizing:border-box;background:#f3eee3;border:1px solid #8b8475;box-shadow:inset 1px 1px 0 #fff,inset -1px -1px 0 #d4ccbc;"></div>
<span class="t" style="top:386.0px;font-size:12px;line-height:16px;color:#000;left:20.75px;transform-origin:0 0;transform:scaleX(0.974);">Эскиз</span>
<svg style="left:61px;top:386px" width="16" height="16" viewBox="0 0 16 16"><rect x="6" y="1.0" width="10.0" height="4.200" fill="#b6b6e8"/><rect x="7" y="2.2" width="8.0" height="1.400" fill="#e6e6fb"/><rect x="3" y="6.3" width="10.0" height="4.200" fill="#b6b6e8"/><rect x="4" y="7.5" width="8.0" height="1.400" fill="#e6e6fb"/><rect x="3" y="9.7" width="10.0" height="1" fill="#2a5a9a"/><rect x="6" y="10.8" width="10.0" height="4.200" fill="#b6b6e8"/><rect x="7" y="12.0" width="8.0" height="1.400" fill="#e6e6fb"/><path d="M3.500 0l.9 2.200 2.200-.9-.9 2.200 2.200.9-2.200.9.9 2.200-2.200-.9-.9 2.200-.9-2.200-2.200.9.9-2.200L-.400 3.500l2.200-.9-.9-2.200 2.200.9z" fill="#f8e010"/><circle cx="3.500" cy="3.500" r="1.300" fill="#fff"/></svg>
<svg style="left:84px;top:386px" width="16" height="16" viewBox="0 0 16 16"><rect x="6" y="1.0" width="10.0" height="4.200" fill="#b6b6e8"/><rect x="7" y="2.2" width="8.0" height="1.400" fill="#e6e6fb"/><rect x="3" y="6.3" width="10.0" height="4.200" fill="#b6b6e8"/><rect x="4" y="7.5" width="8.0" height="1.400" fill="#e6e6fb"/><rect x="3" y="9.7" width="10.0" height="1" fill="#2a5a9a"/><rect x="6" y="10.8" width="10.0" height="4.200" fill="#b6b6e8"/><rect x="7" y="12.0" width="8.0" height="1.400" fill="#e6e6fb"/><path d="M0 3.2h3V.2h2.200v3h3v2.200h-3v3H3v-3H0z" fill="#10a020"/></svg>
<svg style="left:107px;top:386px" width="16" height="16" viewBox="0 0 16 16"><rect x="4.5" y="1.0" width="9.0" height="4.200" fill="#c4c4d0"/><rect x="5.5" y="2.2" width="7.0" height="1.400" fill="#d8d8e0"/><rect x="4.5" y="6.3" width="9.0" height="4.200" fill="#c4c4d0"/><rect x="5.5" y="7.5" width="7.0" height="1.400" fill="#d8d8e0"/><rect x="4.5" y="9.7" width="9.0" height="1" fill="#b0b0c0"/><rect x="4.5" y="10.8" width="9.0" height="4.200" fill="#c4c4d0"/><rect x="5.5" y="12.0" width="7.0" height="1.400" fill="#d8d8e0"/><path d="M5 8l2-2 8 7-1.6 2.2z" fill="#a8b89a" stroke="#9aa890" stroke-width=".6"/><path d="M0.5 7.5h5" stroke="#b8b8c4" stroke-width="1.4"/></svg>
<svg style="left:130px;top:386px" width="16" height="16" viewBox="0 0 16 16"><rect x="6" y="1.0" width="10.0" height="4.200" fill="#b6b6e8"/><rect x="7" y="2.2" width="8.0" height="1.400" fill="#e6e6fb"/><rect x="3" y="6.3" width="10.0" height="4.200" fill="#b6b6e8"/><rect x="4" y="7.5" width="8.0" height="1.400" fill="#e6e6fb"/><rect x="3" y="9.7" width="10.0" height="1" fill="#2a5a9a"/><rect x="6" y="10.8" width="10.0" height="4.200" fill="#b6b6e8"/><rect x="7" y="12.0" width="8.0" height="1.400" fill="#e6e6fb"/><path d="M0.8 0.300l6 6M6.800 0.300l-6 6" stroke="#e83a10" stroke-width="1.800"/></svg>
<svg style="left:153px;top:388px" width="17" height="14" viewBox="0 0 17 14"><rect x="0.5" y="0.5" width="10.5" height="11" fill="#b4b4b4" stroke="#a4a4a4"/><rect x="2.2" y="1" width="7" height="4" fill="#c9c9c9"/><rect x="2.5" y="7.5" width="6" height="4" fill="#9c9c9c"/><text x="8" y="14" font-size="6.5" font-weight="bold" fill="#a8a8c8" font-family='"Liberation Sans",sans-serif'>OK</text></svg>
<svg style="left:179px;top:386px" width="10" height="16" viewBox="0 0 10 16"><path d="M5 0.5L9.7 6.5H6.8V15.5H3.2V6.5H.3z" fill="#a0a0c0"/></svg>
<svg style="left:201px;top:386px" width="10" height="16" viewBox="0 0 10 16"><path d="M5 15.5L9.7 9.5H6.8V.5H3.2V9.5H.3z" fill="#1a1aa8"/></svg>
<svg style="left:221px;top:386px" width="17" height="16" viewBox="0 0 17 16"><rect x="3" y="1.0" width="7.0" height="4.200" fill="#c4c4d0"/><rect x="4" y="2.2" width="5.0" height="1.400" fill="#d8d8e0"/><rect x="3" y="6.3" width="7.0" height="4.200" fill="#c4c4d0"/><rect x="4" y="7.5" width="5.0" height="1.400" fill="#d8d8e0"/><rect x="3" y="9.7" width="7.0" height="1" fill="#b0b0c0"/><rect x="3" y="10.8" width="7.0" height="4.200" fill="#c4c4d0"/><rect x="4" y="12.0" width="5.0" height="1.400" fill="#d8d8e0"/><path d="M2 2v12M0 11.5l2 3 2-3" stroke="#a8a8bc" stroke-width="1.2" fill="none"/><text x="11" y="7" font-size="7" fill="#a8a8c4" font-family='"Liberation Sans",sans-serif'>A</text><text x="11" y="15" font-size="7" fill="#a8a8c4" font-family='"Liberation Sans",sans-serif'>Z</text></svg>
<svg style="left:245px;top:386px" width="17" height="16" viewBox="0 0 17 16"><rect x="3" y="1.0" width="7.0" height="4.200" fill="#c4c4d0"/><rect x="4" y="2.2" width="5.0" height="1.400" fill="#d8d8e0"/><rect x="3" y="6.3" width="7.0" height="4.200" fill="#c4c4d0"/><rect x="4" y="7.5" width="5.0" height="1.400" fill="#d8d8e0"/><rect x="3" y="9.7" width="7.0" height="1" fill="#b0b0c0"/><rect x="3" y="10.8" width="7.0" height="4.200" fill="#c4c4d0"/><rect x="4" y="12.0" width="5.0" height="1.400" fill="#d8d8e0"/><path d="M2 2v12M0 11.5l2 3 2-3" stroke="#a8a8bc" stroke-width="1.2" fill="none"/><text x="11" y="7" font-size="7" fill="#a8a8c4" font-family='"Liberation Sans",sans-serif'>Z</text><text x="11" y="15" font-size="7" fill="#a8a8c4" font-family='"Liberation Sans",sans-serif'>A</text></svg>
<svg style="left:268px;top:386px" width="16" height="16" viewBox="0 0 16 16"><rect x="0" y="0.5" width="16" height="1" fill="#a8d820"/><rect x="3" y="2" width="13" height="3" fill="#dfe3fb" stroke="#8a96d8" stroke-width=".8"/><rect x="0" y="6" width="16" height="1.6" fill="#a8d820"/><path d="M2.5 0l.8 1.8 2-.3-1.3 1.5 1.3 1.5-2-.3-.8 1.8-.8-1.8-2 .3 1.3-1.5L-.3 1.5l2 .3z" fill="#f4e020" stroke="#c8a800" stroke-width=".3"/><rect x="0.5" y="9" width="1.4" height="5.2" fill="#000"/><rect x="2.6" y="9" width="0.8" height="5.2" fill="#000"/><rect x="4.2" y="9" width="1.4" height="5.2" fill="#000"/><rect x="6.3" y="9" width="0.8" height="5.2" fill="#000"/><rect x="7.8" y="9" width="1.6" height="5.2" fill="#000"/><rect x="10.2" y="9" width="0.8" height="5.2" fill="#000"/><rect x="11.8" y="9" width="1.4" height="5.2" fill="#000"/><rect x="14" y="9" width="1.4" height="5.2" fill="#000"/><rect x="0" y="15" width="16" height="1" fill="#8a96d8"/></svg>
<svg style="left:291px;top:386px" width="16" height="16" viewBox="0 0 16 16"><rect x="0" y="0" width="16" height="16" fill="#c4c4c4"/><path d="M2.5 1c-2.2 2.5-2.2 4.5-1 7 1 2.500-1 5 1 7 2-2 2.200-4.500 1-7-1-2.500 1-5-1-7z" fill="#c0a0a0"/><path d="M7.5 1c-2.2 2.5-2.2 4.5-1 7 1 2.500-1 5 1 7 2-2 2.200-4.500 1-7-1-2.500 1-5-1-7z" fill="#b8c0b8"/><path d="M12.5 1c-2.2 2.5-2.2 4.5-1 7 1 2.500-1 5 1 7 2-2 2.200-4.500 1-7-1-2.500 1-5-1-7z" fill="#a8b8a0"/></svg>
<span class="t" style="top:386.0px;font-size:12px;line-height:16px;color:#9a9a9a;left:310px;transform-origin:0 0;transform:scaleX(0.907);">Заполнить цвета</span>
<span class="t" style="top:386.0px;font-size:12px;line-height:16px;color:#000;left:403.75px;transform-origin:0 0;transform:scaleX(0.904);">Заполнить</span>
<svg style="left:460px;top:393px" width="5" height="3"><path d="M0 0h5L2.5 3z" fill="#000"/></svg>
<div style="left:472px;top:385px;width:1px;height:18px;background:#c9c1b2;"></div>
<span class="t" style="top:386.0px;font-size:12px;line-height:16px;color:#000;left:478.5px;transform-origin:0 0;transform:scaleX(0.908);">Проверить</span>
<svg style="left:537px;top:393px" width="5" height="3"><path d="M0 0h5L2.5 3z" fill="#000"/></svg>
<div style="left:548px;top:385px;width:1px;height:18px;background:#c9c1b2;"></div>
<span class="t" style="top:386.0px;font-size:12px;line-height:16px;color:#000;left:554px;transform-origin:0 0;transform:scaleX(0.899);">Подбор</span>
<div style="left:600px;top:385px;width:1px;height:18px;background:#c9c1b2;"></div>
<span class="t" style="top:386.0px;font-size:12px;line-height:16px;color:#000;left:606px;transform-origin:0 0;transform:scaleX(0.942);">Изменить</span>
<div style="left:665px;top:385px;width:1px;height:18px;background:#c9c1b2;"></div>
<span class="t" style="top:386.0px;font-size:12px;line-height:16px;color:#000;left:671px;transform-origin:0 0;transform:scaleX(0.901);">Состав набора</span>
<div style="left:754px;top:385px;width:1px;height:18px;background:#c9c1b2;"></div>
<span class="t" style="top:386.0px;font-size:12px;line-height:16px;color:#000;left:760px;transform-origin:0 0;transform:scaleX(0.930);">Параметры</span>
<div style="left:284px;top:406px;width:1620px;height:419px;background:#fff;border:1px solid #8e8778;box-sizing:border-box;"></div>
<div style="left:285px;top:407px;width:1618px;height:14px;background:#ece4d8;"></div>
<div style="left:285px;top:407px;width:21px;height:14px;background:#cfc8ba;"></div>
<div style="left:306px;top:407px;width:1597px;height:1px;background:#f6f2ea;"></div>
<div style="left:285px;top:810px;width:1618px;height:14px;background:#ece4d8;"></div>
<div style="left:284px;top:421px;width:1620px;height:1px;background:#8e8778;"></div>
<div style="left:284px;top:438px;width:1620px;height:1px;background:#8e8778;"></div>
<div style="left:284px;top:455px;width:1620px;height:1px;background:#8e8778;"></div>
<div style="left:284px;top:472px;width:1620px;height:1px;background:#8e8778;"></div>
<div style="left:284px;top:810px;width:1620px;height:1px;background:#8e8778;"></div>
<div style="left:305px;top:406px;width:1px;height:67px;background:#8e8778;"></div>
<div style="left:305px;top:810px;width:1px;height:15px;background:#8e8778;"></div>
<div style="left:334px;top:406px;width:1px;height:67px;background:#8e8778;"></div>
<div style="left:334px;top:810px;width:1px;height:15px;background:#8e8778;"></div>
<div style="left:363px;top:406px;width:1px;height:67px;background:#8e8778;"></div>
<div style="left:363px;top:810px;width:1px;height:15px;background:#8e8778;"></div>
<div style="left:388px;top:406px;width:1px;height:67px;background:#8e8778;"></div>
<div style="left:388px;top:810px;width:1px;height:15px;background:#8e8778;"></div>
<div style="left:409px;top:406px;width:1px;height:67px;background:#8e8778;"></div>
<div style="left:409px;top:810px;width:1px;height:15px;background:#8e8778;"></div>
<div style="left:430px;top:406px;width:1px;height:67px;background:#8e8778;"></div>
<div style="left:430px;top:810px;width:1px;height:15px;background:#8e8778;"></div>
<div style="left:459px;top:406px;width:1px;height:67px;background:#8e8778;"></div>
<div style="left:459px;top:810px;width:1px;height:15px;background:#8e8778;"></div>
<div style="left:480px;top:406px;width:1px;height:67px;background:#8e8778;"></div>
<div style="left:480px;top:810px;width:1px;height:15px;background:#8e8778;"></div>
<div style="left:501px;top:406px;width:1px;height:67px;background:#8e8778;"></div>
<div style="left:501px;top:810px;width:1px;height:15px;background:#8e8778;"></div>
<div style="left:522px;top:406px;width:1px;height:67px;background:#8e8778;"></div>
<div style="left:522px;top:810px;width:1px;height:15px;background:#8e8778;"></div>
<div style="left:698px;top:406px;width:1px;height:67px;background:#8e8778;"></div>
<div style="left:698px;top:810px;width:1px;height:15px;background:#8e8778;"></div>
<div style="left:923px;top:406px;width:1px;height:67px;background:#8e8778;"></div>
<div style="left:923px;top:810px;width:1px;height:15px;background:#8e8778;"></div>
<div style="left:1075px;top:406px;width:1px;height:67px;background:#8e8778;"></div>
<div style="left:1075px;top:810px;width:1px;height:15px;background:#8e8778;"></div>
<div style="left:1110px;top:406px;width:1px;height:67px;background:#8e8778;"></div>
<div style="left:1110px;top:810px;width:1px;height:15px;background:#8e8778;"></div>
<div style="left:1445px;top:406px;width:1px;height:67px;background:#8e8778;"></div>
<div style="left:1445px;top:810px;width:1px;height:15px;background:#8e8778;"></div>
<div style="left:1465px;top:406px;width:1px;height:67px;background:#8e8778;"></div>
<div style="left:1465px;top:810px;width:1px;height:15px;background:#8e8778;"></div>
<div style="left:1527px;top:406px;width:1px;height:67px;background:#8e8778;"></div>
<div style="left:1527px;top:810px;width:1px;height:15px;background:#8e8778;"></div>
<div style="left:1553px;top:406px;width:1px;height:67px;background:#8e8778;"></div>
<div style="left:1553px;top:810px;width:1px;height:15px;background:#8e8778;"></div>
<div style="left:1618px;top:406px;width:1px;height:67px;background:#8e8778;"></div>
<div style="left:1618px;top:810px;width:1px;height:15px;background:#8e8778;"></div>
<div style="left:1639px;top:406px;width:1px;height:67px;background:#8e8778;"></div>
<div style="left:1639px;top:810px;width:1px;height:15px;background:#8e8778;"></div>
<div style="left:1660px;top:406px;width:1px;height:67px;background:#8e8778;"></div>
<div style="left:1660px;top:810px;width:1px;height:15px;background:#8e8778;"></div>
<div style="left:1681px;top:406px;width:1px;height:67px;background:#8e8778;"></div>
<div style="left:1681px;top:810px;width:1px;height:15px;background:#8e8778;"></div>
<div style="left:1717px;top:406px;width:1px;height:67px;background:#8e8778;"></div>
<div style="left:1717px;top:810px;width:1px;height:15px;background:#8e8778;"></div>
<div style="left:1738px;top:406px;width:1px;height:67px;background:#8e8778;"></div>
<div style="left:1738px;top:810px;width:1px;height:15px;background:#8e8778;"></div>
<div style="left:1759px;top:406px;width:1px;height:67px;background:#8e8778;"></div>
<div style="left:1759px;top:810px;width:1px;height:15px;background:#8e8778;"></div>
<div style="left:1780px;top:406px;width:1px;height:67px;background:#8e8778;"></div>
<div style="left:1780px;top:810px;width:1px;height:15px;background:#8e8778;"></div>
<div style="left:1860px;top:406px;width:1px;height:67px;background:#8e8778;"></div>
<div style="left:1860px;top:810px;width:1px;height:15px;background:#8e8778;"></div>
<div style="left:1881px;top:406px;width:1px;height:67px;background:#8e8778;"></div>
<div style="left:1881px;top:810px;width:1px;height:15px;background:#8e8778;"></div>
<span class="t" style="top:406.0px;font-size:12px;line-height:16px;color:#000;left:287px;transform-origin:0 0;transform:scaleX(0.854);">№</span>
<span class="t" style="top:406.0px;font-size:12px;line-height:16px;color:#000;left:308px;transform-origin:0 0;transform:scaleX(0.801);">№ ...</span>
<span class="t" style="top:406.0px;font-size:12px;line-height:16px;color:#000;left:337px;transform-origin:0 0;transform:scaleX(0.851);">К и...</span>
<span class="t" style="top:406.0px;font-size:12px;line-height:16px;color:#000;left:366px;transform-origin:0 0;transform:scaleX(0.769);">Ви...</span>
<span class="t" style="top:406.0px;font-size:12px;line-height:16px;color:#000;left:391px;transform-origin:0 0;transform:scaleX(0.827);">О...</span>
<span class="t" style="top:406.0px;font-size:12px;line-height:16px;color:#000;left:412px;transform-origin:0 0;transform:scaleX(0.882);">Д...</span>
<span class="t" style="top:406.0px;font-size:12px;line-height:16px;color:#000;left:433px;transform-origin:0 0;transform:scaleX(0.845);">УО</span>
<span class="t" style="top:406.0px;font-size:12px;line-height:16px;color:#000;left:462px;transform-origin:0 0;transform:scaleX(0.858);">И...</span>
<span class="t" style="top:406.0px;font-size:12px;line-height:16px;color:#000;left:483px;transform-origin:0 0;transform:scaleX(0.812);">З...</span>
<span class="t" style="top:406.0px;font-size:12px;line-height:16px;color:#000;left:504px;transform-origin:0 0;transform:scaleX(0.803);">С...</span>
<span class="t" style="top:406.0px;font-size:12px;line-height:16px;color:#000;left:525px;transform-origin:0 0;transform:scaleX(0.916);">Артикул</span>
<span class="t" style="top:406.0px;font-size:12px;line-height:16px;color:#000;left:701px;transform-origin:0 0;transform:scaleX(0.925);">Номенклатура</span>
<span class="t" style="top:406.0px;font-size:12px;line-height:16px;color:#000;left:926px;transform-origin:0 0;transform:scaleX(0.923);">Характеристика номенклат...</span>
<span class="t" style="top:406.0px;font-size:12px;line-height:16px;color:#000;left:1078px;transform-origin:0 0;transform:scaleX(0.914);">Мас...</span>
<span class="t" style="top:406.0px;font-size:12px;line-height:16px;color:#000;left:1113px;transform-origin:0 0;transform:scaleX(0.926);">Комментарий</span>
<span class="t" style="top:406.0px;font-size:12px;line-height:16px;color:#000;left:1448px;transform-origin:0 0;transform:scaleX(0.796);">S ...</span>
<span class="t" style="top:406.0px;font-size:12px;line-height:16px;color:#000;left:1468px;transform-origin:0 0;transform:scaleX(0.945);">Всего м2</span>
<span class="t" style="top:406.0px;font-size:12px;line-height:16px;color:#000;left:1530px;transform-origin:0 0;transform:scaleX(0.818);">Ед.</span>
<span class="t" style="top:406.0px;font-size:12px;line-height:16px;color:#000;left:1556px;transform-origin:0 0;transform:scaleX(0.915);">Количество</span>
<span class="t" style="top:406.0px;font-size:12px;line-height:16px;color:#000;left:1621px;transform-origin:0 0;transform:scaleX(0.871);">К.</span>
<span class="t" style="top:406.0px;font-size:12px;line-height:16px;color:#000;left:1642px;transform-origin:0 0;transform:scaleX(0.847);">Ц...</span>
<span class="t" style="top:406.0px;font-size:12px;line-height:16px;color:#000;left:1663px;transform-origin:0 0;transform:scaleX(0.803);">С...</span>
<span class="t" style="top:406.0px;font-size:12px;line-height:16px;color:#000;left:1684px;transform-origin:0 0;transform:scaleX(0.885);">Ск. и...</span>
<span class="t" style="top:406.0px;font-size:12px;line-height:16px;color:#000;left:1720px;transform-origin:0 0;transform:scaleX(0.822);">%...</span>
<span class="t" style="top:406.0px;font-size:12px;line-height:16px;color:#000;left:1741px;transform-origin:0 0;transform:scaleX(0.803);">С...</span>
<span class="t" style="top:406.0px;font-size:12px;line-height:16px;color:#000;left:1762px;transform-origin:0 0;transform:scaleX(0.803);">С...</span>
<span class="t" style="top:406.0px;font-size:12px;line-height:16px;color:#000;left:1783px;transform-origin:0 0;transform:scaleX(0.922);">Всего</span>
<span class="t" style="top:406.0px;font-size:12px;line-height:16px;color:#000;left:1863px;transform-origin:0 0;transform:scaleX(0.803);">С...</span>
<span class="t" style="top:406.0px;font-size:12px;line-height:16px;color:#000;left:1884px;transform-origin:0 0;transform:scaleX(0.952);">Р...</span>
<div style="left:285px;top:422px;width:20px;height:16px;background:#0a0a8c;"></div>
<span class="t" style="top:422.0px;font-size:12px;line-height:16px;color:#fff;right:1616.50px;transform-origin:100% 0;transform:scaleX(0.900);">1</span>
<span class="t" style="top:422.0px;font-size:12px;line-height:16px;color:#000;right:1587.50px;transform-origin:100% 0;transform:scaleX(0.900);">1</span>
<span class="t" style="top:422.0px;font-size:12px;line-height:16px;color:#000;left:366.5px;transform-origin:0 0;transform:scaleX(0.858);">И...</span>
<span class="t" style="top:422.0px;font-size:12px;line-height:16px;color:#000;right:1512.50px;transform-origin:100% 0;transform:scaleX(0.900);">1</span>
<span class="t" style="top:422.0px;font-size:12px;line-height:16px;color:#000;right:1462.50px;transform-origin:100% 0;transform:scaleX(0.899);">1,60</span>
<span class="t" style="top:422.0px;font-size:12px;line-height:16px;color:#000;right:1441.50px;transform-origin:100% 0;transform:scaleX(0.900);">1</span>
<span class="t" style="top:422.0px;font-size:12px;line-height:16px;color:#000;right:1420.50px;transform-origin:100% 0;transform:scaleX(0.900);">3</span>
<span class="t" style="top:422.0px;font-size:12px;line-height:16px;color:#000;right:1399.50px;transform-origin:100% 0;transform:scaleX(0.900);">3</span>
<span class="t" style="top:422.0px;font-size:12px;line-height:16px;color:#000;left:525.5px;transform-origin:0 0;transform:scaleX(0.900);">REHAU 60 Blitz new</span>
<span class="t" style="top:422.0px;font-size:12px;line-height:16px;color:#000;left:701.5px;transform-origin:0 0;transform:scaleX(0.897);">REHAU 60 Blitz new, Окно (ROTO NT), Вну...</span>
<span class="t" style="top:422.0px;font-size:12px;line-height:16px;color:#000;left:926.5px;transform-origin:0 0;transform:scaleX(0.907);">100 169/1,2070x1500,Белый</span>
<span class="t" style="top:422.0px;font-size:12px;line-height:16px;color:#000;right:811.50px;transform-origin:100% 0;transform:scaleX(0.866);">106...</span>
<span class="t" style="top:422.0px;font-size:12px;line-height:16px;color:#000;left:1448.5px;transform-origin:0 0;transform:scaleX(0.839);">3...</span>
<span class="t" style="top:422.0px;font-size:12px;line-height:16px;color:#000;right:394.50px;transform-origin:100% 0;transform:scaleX(0.899);">3,105</span>
<span class="t" style="top:422.0px;font-size:12px;line-height:16px;color:#000;left:1530.5px;transform-origin:0 0;transform:scaleX(0.860);">шт</span>
<span class="t" style="top:422.0px;font-size:12px;line-height:16px;color:#000;right:303.50px;transform-origin:100% 0;transform:scaleX(0.899);">1,000</span>
<span class="t" style="top:422.0px;font-size:12px;line-height:16px;color:#000;left:1621.5px;transform-origin:0 0;transform:scaleX(0.839);">1...</span>
<span class="t" style="top:422.0px;font-size:12px;line-height:16px;color:#000;left:1642.5px;transform-origin:0 0;transform:scaleX(0.839);">1...</span>
<span class="t" style="top:422.0px;font-size:12px;line-height:16px;color:#000;left:1663.5px;transform-origin:0 0;transform:scaleX(0.839);">1...</span>
<span class="t" style="top:422.0px;font-size:12px;line-height:16px;color:#000;right:204.50px;transform-origin:100% 0;transform:scaleX(0.899);">45,00</span>
<span class="t" style="top:422.0px;font-size:12px;line-height:16px;color:#000;left:1741.5px;transform-origin:0 0;transform:scaleX(0.839);">8...</span>
<span class="t" style="top:422.0px;font-size:12px;line-height:16px;color:#000;left:1762.5px;transform-origin:0 0;transform:scaleX(0.839);">1...</span>
<span class="t" style="top:422.0px;font-size:12px;line-height:16px;color:#000;right:61.50px;transform-origin:100% 0;transform:scaleX(0.878);">8 983,41</span>
<span class="t" style="top:422.0px;font-size:12px;line-height:16px;color:#000;left:1863.5px;transform-origin:0 0;transform:scaleX(0.839);">1...</span>
<span class="t" style="top:439.0px;font-size:12px;line-height:16px;color:#000;right:1616.50px;transform-origin:100% 0;transform:scaleX(0.900);">2</span>
<span class="t" style="top:439.0px;font-size:12px;line-height:16px;color:#000;right:1587.50px;transform-origin:100% 0;transform:scaleX(0.900);">2</span>
<span class="t" style="top:439.0px;font-size:12px;line-height:16px;color:#000;left:366.5px;transform-origin:0 0;transform:scaleX(0.858);">И...</span>
<span class="t" style="top:439.0px;font-size:12px;line-height:16px;color:#000;right:1512.50px;transform-origin:100% 0;transform:scaleX(0.900);">1</span>
<span class="t" style="top:439.0px;font-size:12px;line-height:16px;color:#000;right:1462.50px;transform-origin:100% 0;transform:scaleX(0.899);">2,30</span>
<span class="t" style="top:439.0px;font-size:12px;line-height:16px;color:#000;right:1441.50px;transform-origin:100% 0;transform:scaleX(0.900);">1</span>
<span class="t" style="top:439.0px;font-size:12px;line-height:16px;color:#000;right:1420.50px;transform-origin:100% 0;transform:scaleX(0.900);">3</span>
<span class="t" style="top:439.0px;font-size:12px;line-height:16px;color:#000;right:1399.50px;transform-origin:100% 0;transform:scaleX(0.900);">3</span>
<span class="t" style="top:439.0px;font-size:12px;line-height:16px;color:#000;left:525.5px;transform-origin:0 0;transform:scaleX(0.900);">REHAU 60 Blitz new</span>
<span class="t" style="top:439.0px;font-size:12px;line-height:16px;color:#000;left:701.5px;transform-origin:0 0;transform:scaleX(0.897);">REHAU 60 Blitz new, Окно (ROTO NT), Вну...</span>
<span class="t" style="top:439.0px;font-size:12px;line-height:16px;color:#000;left:926.5px;transform-origin:0 0;transform:scaleX(0.907);">100 169/2,2630x1500,Белый</span>
<span class="t" style="top:439.0px;font-size:12px;line-height:16px;color:#000;right:811.50px;transform-origin:100% 0;transform:scaleX(0.866);">136...</span>
<span class="t" style="top:439.0px;font-size:12px;line-height:16px;color:#000;left:1448.5px;transform-origin:0 0;transform:scaleX(0.839);">3...</span>
<span class="t" style="top:439.0px;font-size:12px;line-height:16px;color:#000;right:394.50px;transform-origin:100% 0;transform:scaleX(0.899);">3,945</span>
<span class="t" style="top:439.0px;font-size:12px;line-height:16px;color:#000;left:1530.5px;transform-origin:0 0;transform:scaleX(0.860);">шт</span>
<span class="t" style="top:439.0px;font-size:12px;line-height:16px;color:#000;right:303.50px;transform-origin:100% 0;transform:scaleX(0.899);">1,000</span>
<span class="t" style="top:439.0px;font-size:12px;line-height:16px;color:#000;left:1621.5px;transform-origin:0 0;transform:scaleX(0.839);">1...</span>
<span class="t" style="top:439.0px;font-size:12px;line-height:16px;color:#000;left:1642.5px;transform-origin:0 0;transform:scaleX(0.839);">2...</span>
<span class="t" style="top:439.0px;font-size:12px;line-height:16px;color:#000;left:1663.5px;transform-origin:0 0;transform:scaleX(0.839);">2...</span>
<span class="t" style="top:439.0px;font-size:12px;line-height:16px;color:#000;right:204.50px;transform-origin:100% 0;transform:scaleX(0.899);">45,00</span>
<span class="t" style="top:439.0px;font-size:12px;line-height:16px;color:#000;left:1741.5px;transform-origin:0 0;transform:scaleX(0.839);">1...</span>
<span class="t" style="top:439.0px;font-size:12px;line-height:16px;color:#000;left:1762.5px;transform-origin:0 0;transform:scaleX(0.839);">1...</span>
<span class="t" style="top:439.0px;font-size:12px;line-height:16px;color:#000;right:61.50px;transform-origin:100% 0;transform:scaleX(0.880);">12 697,28</span>
<span class="t" style="top:439.0px;font-size:12px;line-height:16px;color:#000;left:1863.5px;transform-origin:0 0;transform:scaleX(0.839);">1...</span>
<span class="t" style="top:456.0px;font-size:12px;line-height:16px;color:#000;right:1616.50px;transform-origin:100% 0;transform:scaleX(0.900);">3</span>
<span class="t" style="top:456.0px;font-size:12px;line-height:16px;color:#000;right:1587.50px;transform-origin:100% 0;transform:scaleX(0.900);">3</span>
<span class="t" style="top:456.0px;font-size:12px;line-height:16px;color:#000;left:366.5px;transform-origin:0 0;transform:scaleX(0.858);">И...</span>
<span class="t" style="top:456.0px;font-size:12px;line-height:16px;color:#000;right:1512.50px;transform-origin:100% 0;transform:scaleX(0.900);">2</span>
<span class="t" style="top:456.0px;font-size:12px;line-height:16px;color:#000;right:1462.50px;transform-origin:100% 0;transform:scaleX(0.899);">2,60</span>
<span class="t" style="top:456.0px;font-size:12px;line-height:16px;color:#000;right:1441.50px;transform-origin:100% 0;transform:scaleX(0.900);">2</span>
<span class="t" style="top:456.0px;font-size:12px;line-height:16px;color:#000;right:1420.50px;transform-origin:100% 0;transform:scaleX(0.900);">4</span>
<span class="t" style="top:456.0px;font-size:12px;line-height:16px;color:#000;right:1399.50px;transform-origin:100% 0;transform:scaleX(0.900);">4</span>
<span class="t" style="top:456.0px;font-size:12px;line-height:16px;color:#000;left:525.5px;transform-origin:0 0;transform:scaleX(0.900);">REHAU 60 Blitz new</span>
<span class="t" style="top:456.0px;font-size:12px;line-height:16px;color:#000;left:701.5px;transform-origin:0 0;transform:scaleX(0.897);">REHAU 60 Blitz new, Окно (ROTO NT), Вну...</span>
<span class="t" style="top:456.0px;font-size:12px;line-height:16px;color:#000;left:926.5px;transform-origin:0 0;transform:scaleX(0.907);">100 169/3,1280x1500,Белый</span>
<span class="t" style="top:456.0px;font-size:12px;line-height:16px;color:#000;right:811.50px;transform-origin:100% 0;transform:scaleX(1.006);">67кг.</span>
<span class="t" style="top:456.0px;font-size:12px;line-height:16px;color:#000;left:1448.5px;transform-origin:0 0;transform:scaleX(0.839);">1...</span>
<span class="t" style="top:456.0px;font-size:12px;line-height:16px;color:#000;right:394.50px;transform-origin:100% 0;transform:scaleX(0.899);">3,840</span>
<span class="t" style="top:456.0px;font-size:12px;line-height:16px;color:#000;left:1530.5px;transform-origin:0 0;transform:scaleX(0.860);">шт</span>
<span class="t" style="top:456.0px;font-size:12px;line-height:16px;color:#000;right:303.50px;transform-origin:100% 0;transform:scaleX(0.899);">2,000</span>
<span class="t" style="top:456.0px;font-size:12px;line-height:16px;color:#000;left:1621.5px;transform-origin:0 0;transform:scaleX(0.839);">1...</span>
<span class="t" style="top:456.0px;font-size:12px;line-height:16px;color:#000;left:1642.5px;transform-origin:0 0;transform:scaleX(0.839);">1...</span>
<span class="t" style="top:456.0px;font-size:12px;line-height:16px;color:#000;left:1663.5px;transform-origin:0 0;transform:scaleX(0.839);">2...</span>
<span class="t" style="top:456.0px;font-size:12px;line-height:16px;color:#000;right:204.50px;transform-origin:100% 0;transform:scaleX(0.899);">45,00</span>
<span class="t" style="top:456.0px;font-size:12px;line-height:16px;color:#000;left:1741.5px;transform-origin:0 0;transform:scaleX(0.839);">1...</span>
<span class="t" style="top:456.0px;font-size:12px;line-height:16px;color:#000;left:1762.5px;transform-origin:0 0;transform:scaleX(0.839);">1...</span>
<span class="t" style="top:456.0px;font-size:12px;line-height:16px;color:#000;right:61.50px;transform-origin:100% 0;transform:scaleX(0.880);">12 752,31</span>
<span class="t" style="top:456.0px;font-size:12px;line-height:16px;color:#000;left:1863.5px;transform-origin:0 0;transform:scaleX(0.839);">1...</span>
<span class="t" style="top:809.5px;font-size:12px;line-height:16px;color:#000;left:391px;transform-origin:0 0;transform:scaleX(0.900);">4</span>
<span class="t" style="top:809.5px;font-size:12px;line-height:16px;color:#000;left:433px;transform-origin:0 0;transform:scaleX(0.899);">6,50</span>
<span class="t" style="top:809.5px;font-size:12px;line-height:16px;color:#000;left:462px;transform-origin:0 0;transform:scaleX(0.900);">4</span>
<span class="t" style="top:809.5px;font-size:12px;line-height:16px;color:#000;left:483px;transform-origin:0 0;transform:scaleX(0.823);">10</span>
<span class="t" style="top:809.5px;font-size:12px;line-height:16px;color:#000;left:504px;transform-origin:0 0;transform:scaleX(0.823);">10</span>
<span class="t" style="top:809.5px;font-size:12px;line-height:16px;color:#000;left:1468px;transform-origin:0 0;transform:scaleX(0.899);">10,890</span>
<svg style="left:0;top:0" width="300" height="700" viewBox="0 0 300 700"><rect x="42.5" y="552.5" width="217" height="127" fill="#fff" stroke="#000"/><rect x="48.500" y="557.500" width="60" height="117" fill="#d9ffff" stroke="#000"/><rect x="194.5" y="557.500" width="60" height="117" fill="#d9ffff" stroke="#000"/><path d="M42.5 552.500l6 5M42.5 679.500l6-5M259.5 552.500l-5 5M259.5 679.500l-5-5" stroke="#000" stroke-width=".8"/><path d="M108.5 557.500h86M108.5 674.500h86" stroke="#000" stroke-width="1"/><rect x="113.5" y="554.5" width="76" height="123" fill="#fff" stroke="#000" stroke-width="1.2"/><rect x="121.5" y="560.5" width="59" height="110" fill="#d9ffff" stroke="#000"/><path d="M113.5 554.500l8 6M189.500 554.500l-9 6M113.5 677.500l8-7M189.500 677.500l-9-7" stroke="#000" stroke-width=".8"/><path d="M121.5 670.500L151.500 560.500L180.500 670.500M180.500 560.500L121.5 616L180.500 670.500" fill="none" stroke="#000" stroke-width=".9"/><path d="M115.300 613.500h4.700v4.200h-1v6.800h-2.700v-6.800h-1z" fill="#fff" stroke="#000" stroke-width="1.200"/><rect x="115.300" y="613.300" width="4.700" height="1.600" fill="#000"/></svg>
<span class="t" style="top:844.0px;font-size:12px;line-height:16px;color:#000080;left:10.5px;transform-origin:0 0;transform:scaleX(0.914);">Тип цен: Не заполнено!</span>
<span class="t" style="top:844.0px;font-size:12px;line-height:16px;color:#000;left:867px;transform-origin:0 0;transform:scaleX(0.946);">Всего УО:</span>
<span class="t" style="top:844.0px;font-size:12px;line-height:16px;color:#000;font-weight:bold;right:959.50px;transform-origin:100% 0;transform:scaleX(1.070);">6,50</span>
<span class="t" style="top:844.0px;font-size:12px;line-height:16px;color:#000;left:968px;transform-origin:0 0;transform:scaleX(0.887);">Заполнений:</span>
<span class="t" style="top:844.0px;font-size:12px;line-height:16px;color:#000;font-weight:bold;right:837.50px;transform-origin:100% 0;transform:scaleX(1.011);">10</span>
<span class="t" style="top:866.0px;font-size:12px;line-height:16px;color:#000;left:867px;transform-origin:0 0;transform:scaleX(0.919);">Изделий:</span>
<span class="t" style="top:866.0px;font-size:12px;line-height:16px;color:#000;font-weight:bold;right:959.50px;transform-origin:100% 0;transform:scaleX(0.900);">4</span>
<span class="t" style="top:866.0px;font-size:12px;line-height:16px;color:#000;left:968px;transform-origin:0 0;transform:scaleX(0.902);">Стеклопакетов:</span>
<span class="t" style="top:866.0px;font-size:12px;line-height:16px;color:#000;font-weight:bold;right:837.50px;transform-origin:100% 0;transform:scaleX(1.011);">10</span>
<span class="t" style="top:844.0px;font-size:12px;line-height:16px;color:#000;left:1761px;transform-origin:0 0;transform:scaleX(0.891);">Всего (руб.):</span>
<span class="t" style="top:842.5px;font-size:13px;line-height:17px;color:#000;font-weight:bold;right:13.00px;transform-origin:100% 0;transform:scaleX(0.968);">34 435,00</span>
<span class="t" style="top:866.0px;font-size:12px;line-height:16px;color:#000;left:1761.4px;transform-origin:0 0;transform:scaleX(0.887);">НДС (в т. ч.):</span>
<span class="t" style="top:864.5px;font-size:13px;line-height:17px;color:#000;font-weight:bold;right:13.00px;transform-origin:100% 0;transform:scaleX(0.968);">5 252,79</span>
<svg style="left:1828px;top:852px" width="92" height="44" viewBox="1828 852 92 44"><path d="M1867.500 861.200C1858 860 1846 861.500 1840 864.500C1834.500 867.500 1833.200 871 1833.600 875C1834 881 1838 885 1845 887.500C1856 890.600 1872 891 1884 890.300C1897 889.500 1907 887 1911 882C1915 878 1916.200 874 1915.300 869.500C1914.300 865 1910 861.500 1905 859.500C1902 857.900 1899 857 1896 856.900C1886 856.700 1876 857.100 1868 858C1862 858.800 1858 859.600 1855.500 860.600" fill="none" stroke="#f01010" stroke-width="2.100" stroke-linecap="round" stroke-linejoin="round"/></svg>
<div style="left:10px;top:886px;width:134px;height:19px;box-sizing:border-box;background:#ece4d8;border:1px solid #8b8475;box-shadow:inset 1px 1px 0 #fbf8f1,inset -1px -1px 0 #cfc7b8;"></div>
<span class="t" style="top:888.0px;font-size:12px;line-height:16px;color:#000;left:17px;transform-origin:0 0;transform:scaleX(0.930);">Добавить комментарий</span>
<div style="left:10px;top:908px;width:1901px;height:68px;background:#fff;border:1px solid #8b8475;box-sizing:border-box;"></div>
<span class="t" style="top:910.0px;font-size:12px;line-height:16px;color:#000;left:13.5px;transform-origin:0 0;transform:scaleX(0.898);">16</span>
<div style="left:2px;top:980px;width:1916px;height:24px;background:#ece4d8;"></div>
<span class="t" style="top:984.0px;font-size:12px;line-height:16px;color:#000;left:1486px;transform-origin:0 0;transform:scaleX(0.927);">Пакетная печать</span>
<span class="t" style="top:984.0px;font-size:12px;line-height:16px;color:#000;left:1581px;transform-origin:0 0;transform:scaleX(0.928);">Печать</span>
<div style="left:1625px;top:983px;width:1px;height:18px;background:#c9c1b2;"></div>
<span class="t" style="top:984.0px;font-size:12px;line-height:16px;color:#000;font-weight:bold;left:1633px;transform-origin:0 0;transform:scaleX(1.013);">Запуск в ПРОИЗВОДСТВО</span>
<div style="left:1799px;top:983px;width:1px;height:18px;background:#c9c1b2;"></div>
<span class="t" style="top:984.0px;font-size:12px;line-height:16px;color:#000;left:1806.75px;transform-origin:0 0;transform:scaleX(0.917);">Записать</span>
<div style="left:1861px;top:983px;width:1px;height:18px;background:#c9c1b2;"></div>
<span class="t" style="top:984.0px;font-size:12px;line-height:16px;color:#000;left:1868.75px;transform-origin:0 0;transform:scaleX(0.936);">Закрыть</span>
<div style="left:0px;top:1004px;width:1920px;height:3px;background:#fbfaf8;"></div>
<div style="left:1px;top:1007px;width:158px;height:20px;background:#9e9e9e;border:1px solid #857d6d;box-sizing:border-box;"></div>
<svg style="left:3px;top:1009px" width="18" height="16" viewBox="0 0 18 16"><rect x="2" y="2" width="5.500" height="5" fill="#ffff99"/><path d="M11.500 3.500H15V10.500L13.500 8.500z" fill="#ffff99"/><path d="M0 8.700L3.800 5.700H5.800L9.300 2.700H10.800L13.600 8.700z" fill="#fff"/><rect x="0.500" y="8.700" width="13.500" height="5.300" fill="#9c9860"/><path d="M12 8.700L15 12.500V14H14z" fill="#5e5a20"/><rect x="15" y="3.500" width="1" height="10.500" fill="#6e6a28"/></svg>
<span class="t" style="top:1009.0px;font-size:12px;line-height:16px;color:#f2f2f2;left:20.5px;transform-origin:0 0;transform:scaleX(0.939);">Заказы покупателей</span>
<div style="left:160px;top:1007px;width:158px;height:20px;background:#9e9e9e;border:1px solid #857d6d;box-sizing:border-box;"></div>
<svg style="left:162px;top:1009px" width="18" height="16" viewBox="0 0 18 16"><rect x="2" y="2" width="5.500" height="5" fill="#ffff99"/><path d="M11.500 3.500H15V10.500L13.500 8.500z" fill="#ffff99"/><path d="M0 8.700L3.800 5.700H5.800L9.300 2.700H10.800L13.600 8.700z" fill="#fff"/><rect x="0.500" y="8.700" width="13.500" height="5.300" fill="#9c9860"/><path d="M12 8.700L15 12.500V14H14z" fill="#5e5a20"/><rect x="15" y="3.500" width="1" height="10.500" fill="#6e6a28"/></svg>
<span class="t" style="top:1009.0px;font-size:12px;line-height:16px;color:#f2f2f2;left:179.5px;transform-origin:0 0;transform:scaleX(0.914);">Приходные кассовые ор...</span>
<div style="left:319px;top:1007px;width:158px;height:20px;background:#9e9e9e;border:1px solid #857d6d;box-sizing:border-box;"></div>
<svg style="left:321px;top:1009px" width="18" height="16" viewBox="0 0 18 16"><rect x="2" y="2" width="5.500" height="5" fill="#ffff99"/><path d="M11.500 3.500H15V10.500L13.500 8.500z" fill="#ffff99"/><path d="M0 8.700L3.800 5.700H5.800L9.300 2.700H10.800L13.600 8.700z" fill="#fff"/><rect x="0.500" y="8.700" width="13.500" height="5.300" fill="#9c9860"/><path d="M12 8.700L15 12.500V14H14z" fill="#5e5a20"/><rect x="15" y="3.500" width="1" height="10.500" fill="#6e6a28"/></svg>
<span class="t" style="top:1009.0px;font-size:12px;line-height:16px;color:#f2f2f2;left:338.5px;transform-origin:0 0;transform:scaleX(0.910);">Заявки на расходование...</span>
<div style="left:478px;top:1007px;width:158px;height:20px;background:#9e9e9e;border:1px solid #857d6d;box-sizing:border-box;"></div>
<svg style="left:480px;top:1009px" width="18" height="16" viewBox="0 0 18 16"><rect x="2" y="2" width="5.500" height="5" fill="#ffff99"/><path d="M11.500 3.500H15V10.500L13.500 8.500z" fill="#ffff99"/><path d="M0 8.700L3.800 5.700H5.800L9.300 2.700H10.800L13.600 8.700z" fill="#fff"/><rect x="0.500" y="8.700" width="13.500" height="5.300" fill="#9c9860"/><path d="M12 8.700L15 12.500V14H14z" fill="#5e5a20"/><rect x="15" y="3.500" width="1" height="10.500" fill="#6e6a28"/></svg>
<span class="t" style="top:1009.0px;font-size:12px;line-height:16px;color:#f2f2f2;left:497.5px;transform-origin:0 0;transform:scaleX(0.913);">Расходные кассовые ор...</span>
<div style="left:637px;top:1007px;width:158px;height:20px;background:#9e9e9e;border:1px solid #857d6d;box-sizing:border-box;"></div>
<svg style="left:639px;top:1009px" width="18" height="16" viewBox="0 0 18 16"><rect x="2" y="2" width="5.500" height="5" fill="#ffff99"/><path d="M11.500 3.500H15V10.500L13.500 8.500z" fill="#ffff99"/><path d="M0 8.700L3.800 5.700H5.800L9.300 2.700H10.800L13.600 8.700z" fill="#fff"/><rect x="0.500" y="8.700" width="13.500" height="5.300" fill="#9c9860"/><path d="M12 8.700L15 12.500V14H14z" fill="#5e5a20"/><rect x="15" y="3.500" width="1" height="10.500" fill="#6e6a28"/></svg>
<span class="t" style="top:1009.0px;font-size:12px;line-height:16px;color:#f2f2f2;left:656.5px;transform-origin:0 0;transform:scaleX(0.917);">Авансовые отчеты</span>
<div style="left:796px;top:1007px;width:158px;height:20px;background:#9e9e9e;border:1px solid #857d6d;box-sizing:border-box;"></div>
<svg style="left:798px;top:1009px" width="18" height="16" viewBox="0 0 18 16"><rect x="2" y="2" width="5.500" height="5" fill="#ffff99"/><path d="M11.500 3.500H15V10.500L13.500 8.500z" fill="#ffff99"/><path d="M0 8.700L3.800 5.700H5.800L9.300 2.700H10.800L13.600 8.700z" fill="#fff"/><rect x="0.500" y="8.700" width="13.500" height="5.300" fill="#9c9860"/><path d="M12 8.700L15 12.500V14H14z" fill="#5e5a20"/><rect x="15" y="3.500" width="1" height="10.500" fill="#6e6a28"/></svg>
<span class="t" style="top:1009.0px;font-size:12px;line-height:16px;color:#f2f2f2;left:815.5px;transform-origin:0 0;transform:scaleX(0.925);">Зарплаты к выплате орг...</span>
<div style="left:955px;top:1007px;width:158px;height:20px;background:#9e9e9e;border:1px solid #857d6d;box-sizing:border-box;"></div>
<svg style="left:957px;top:1009px" width="18" height="16" viewBox="0 0 18 16"><rect x="1.200" y="0.200" width="9" height="12" fill="#fff"/><rect x="3" y="2" width="2" height="1" fill="#10108a"/><rect x="7" y="2" width="2" height="1" fill="#10108a"/><rect x="3" y="4.2" width="6" height="1" fill="#9a9a9a"/><rect x="3" y="5.800000000000001" width="6" height="1" fill="#9a9a9a"/><rect x="3" y="7.4" width="6" height="1" fill="#9a9a9a"/><rect x="3" y="9.0" width="6" height="1" fill="#9a9a9a"/><rect x="3" y="10.600000000000001" width="6" height="1" fill="#9a9a9a"/><path d="M4.800 4v8M7 4v8" stroke="#9a9a9a" stroke-width=".7"/><path d="M11.600 2.300L15.800 4L11 14.800L7.500 13.600L10.300 13z" fill="#fff"/><path d="M11.600 2.300L15.800 4L11 14.800" fill="none" stroke="#666" stroke-width=".6" stroke-dasharray="1 1"/></svg>
<span class="t" style="top:1009.0px;font-size:12px;line-height:16px;color:#f2f2f2;left:974.5px;transform-origin:0 0;transform:scaleX(0.912);">Ведомость по...: Основная</span>
<div style="left:1114px;top:1007px;width:158px;height:20px;background:#9e9e9e;border:1px solid #857d6d;box-sizing:border-box;"></div>
<svg style="left:1116px;top:1009px" width="18" height="16" viewBox="0 0 18 16"><rect x="2" y="2" width="5.500" height="5" fill="#ffff99"/><path d="M11.500 3.500H15V10.500L13.500 8.500z" fill="#ffff99"/><path d="M0 8.700L3.800 5.700H5.800L9.300 2.700H10.800L13.600 8.700z" fill="#fff"/><rect x="0.500" y="8.700" width="13.500" height="5.300" fill="#9c9860"/><path d="M12 8.700L15 12.500V14H14z" fill="#5e5a20"/><rect x="15" y="3.500" width="1" height="10.500" fill="#6e6a28"/></svg>
<span class="t" style="top:1009.0px;font-size:12px;line-height:16px;color:#f2f2f2;left:1133.5px;transform-origin:0 0;transform:scaleX(0.936);">Корректировки долга</span>
<div style="left:1273px;top:1007px;width:158px;height:20px;background:#9e9e9e;border:1px solid #857d6d;box-sizing:border-box;"></div>
<svg style="left:1275px;top:1009px" width="18" height="16" viewBox="0 0 18 16"><rect x="2" y="2" width="5.500" height="5" fill="#ffff99"/><path d="M11.500 3.500H15V10.500L13.500 8.500z" fill="#ffff99"/><path d="M0 8.700L3.800 5.700H5.800L9.300 2.700H10.800L13.600 8.700z" fill="#fff"/><rect x="0.500" y="8.700" width="13.500" height="5.300" fill="#9c9860"/><path d="M12 8.700L15 12.500V14H14z" fill="#5e5a20"/><rect x="15" y="3.500" width="1" height="10.500" fill="#6e6a28"/></svg>
<span class="t" style="top:1009.0px;font-size:12px;line-height:16px;color:#f2f2f2;left:1292.5px;transform-origin:0 0;transform:scaleX(0.897);">Платежные поручения (в...</span>
<div style="left:1432px;top:1007px;width:158px;height:20px;background:#9e9e9e;border:1px solid #857d6d;box-sizing:border-box;"></div>
<svg style="left:1434px;top:1009px" width="18" height="16" viewBox="0 0 18 16"><rect x="2" y="2" width="5.500" height="5" fill="#ffff99"/><path d="M11.500 3.500H15V10.500L13.500 8.500z" fill="#ffff99"/><path d="M0 8.700L3.800 5.700H5.800L9.300 2.700H10.800L13.600 8.700z" fill="#fff"/><rect x="0.500" y="8.700" width="13.500" height="5.300" fill="#9c9860"/><path d="M12 8.700L15 12.500V14H14z" fill="#5e5a20"/><rect x="15" y="3.500" width="1" height="10.500" fill="#6e6a28"/></svg>
<span class="t" style="top:1009.0px;font-size:12px;line-height:16px;color:#f2f2f2;left:1451.5px;transform-origin:0 0;transform:scaleX(0.897);">Платежные поручения (и...</span>
<div style="left:1591px;top:1007px;width:158px;height:20px;background:#9e9e9e;border:1px solid #857d6d;box-sizing:border-box;"></div>
<svg style="left:1593px;top:1009px" width="18" height="16" viewBox="0 0 18 16"><rect x="1.200" y="0.200" width="9" height="12" fill="#fff"/><rect x="3" y="2" width="2" height="1" fill="#10108a"/><rect x="7" y="2" width="2" height="1" fill="#10108a"/><rect x="3" y="4.2" width="6" height="1" fill="#9a9a9a"/><rect x="3" y="5.800000000000001" width="6" height="1" fill="#9a9a9a"/><rect x="3" y="7.4" width="6" height="1" fill="#9a9a9a"/><rect x="3" y="9.0" width="6" height="1" fill="#9a9a9a"/><rect x="3" y="10.600000000000001" width="6" height="1" fill="#9a9a9a"/><path d="M4.800 4v8M7 4v8" stroke="#9a9a9a" stroke-width=".7"/><path d="M11.600 2.300L15.800 4L11 14.800L7.500 13.600L10.300 13z" fill="#fff"/><path d="M11.600 2.300L15.800 4L11 14.800" fill="none" stroke="#666" stroke-width=".6" stroke-dasharray="1 1"/></svg>
<span class="t" style="top:1009.0px;font-size:12px;line-height:16px;color:#f2f2f2;left:1610.5px;transform-origin:0 0;transform:scaleX(0.922);">Ведом...: Основная касса</span>
<div style="left:1750px;top:1007px;width:158px;height:20px;background:#585858;border:1px solid #4e4a42;box-sizing:border-box;"></div>
<svg style="left:1752px;top:1009px" width="18" height="16" viewBox="0 0 18 16"><rect x="1.500" y="0.500" width="10.500" height="13" fill="#fff" stroke="#e0e0e0"/><rect x="3" y="2.200" width="7.500" height="1.200" fill="#2a5aa8"/><path d="M5 5.200L7 7.600 5 10 3 7.600z" fill="none" stroke="#2a5aa8" stroke-width=".9"/><rect x="7.500" y="5.500" width="3" height=".8" fill="#7ab8e0"/><rect x="7.800" y="7.200" width="2.600" height=".8" fill="#7ab8e0"/><rect x="7.500" y="8.900" width="2" height=".8" fill="#a090d0"/></svg>
<span class="t" style="top:1009.0px;font-size:12px;line-height:16px;color:#fff;left:1769.5px;transform-origin:0 0;transform:scaleX(0.913);">...: продажа, комиссия. ...</span>
<span class="t" style="top:1031.0px;font-size:12px;line-height:16px;color:#000;left:5px;transform-origin:0 0;transform:scaleX(0.918);">Для получения подсказки нажмите F1</span>
<div style="left:1px;top:1030px;width:1846px;height:18px;border:1px solid #e0d9cc;box-sizing:border-box;border-right-color:#f8f5ef;border-bottom-color:#f8f5ef;"></div>
<div style="left:1852px;top:1030px;width:29px;height:18px;border:1px solid #d9d2c4;box-sizing:border-box;border-right-color:#f8f5ef;border-bottom-color:#f8f5ef;"></div>
<div style="left:1886px;top:1030px;width:33px;height:18px;border:1px solid #d9d2c4;box-sizing:border-box;border-right-color:#f8f5ef;border-bottom-color:#f8f5ef;"></div>
<span class="t" style="top:1031.0px;font-size:12px;line-height:16px;color:#9a9a9a;left:1854px;transform-origin:0 0;transform:scaleX(0.891);">CAP</span>
<span class="t" style="top:1031.0px;font-size:12px;line-height:16px;color:#000;left:1888px;transform-origin:0 0;transform:scaleX(0.915);">NUM</span>
<div style="left:0px;top:1047px;width:1920px;height:1px;background:#d9d2c6;"></div>
<div style="left:0px;top:1048px;width:1920px;height:1px;background:#f4efe5;"></div>
<div style="left:0;top:1049px;width:1920px;height:31px;background:linear-gradient(#222 0,#222 1px,#8a8a8a 1px,#8a8a8a 2px,#707070 2px,#5a5a5a 15px,#3c3c3c 15px,#2a2a2a 29px,#0c0c0c 29px,#0c0c0c 30px,#fff 30px);"></div>
<div style="left:96px;top:1050px;width:500px;height:28px;background:linear-gradient(90deg,rgba(0,0,0,.38) 0,rgba(0,0,0,.3) 110px,rgba(0,0,0,0) 500px);"></div>
<div style="left:0;top:1049px;width:97px;height:30px;border-radius:0 7px 2px 0/0 18px 2px 0;background:linear-gradient(#5e2608 0,#5e2608 1px,#f8ac80 1px,#ef9660 5px,#e27a38 13px,#dc6c26 20px,#c7580e 20.5px,#bb4f0a 27px,#a04408 29px,#6a2a04 30px);box-shadow:1px 0 2px rgba(0,0,0,.8);"></div>
<svg style="left:10px;top:1058px" width="15" height="15" viewBox="0 0 15 15"><path d="M3 1.200Q5.500 -0.300 8.200 1.200L7 6.800Q4.500 5.600 1.600 7.200z" fill="#e8552a"/><path d="M9 1.600Q11.800 3.200 15 1.400L13.600 7Q10.800 8.600 7.800 7z" fill="#62b430"/><path d="M1.400 8Q4.200 6.400 6.800 7.600L5.600 13.200Q3 12 0 13.800z" fill="#2a8ae8"/><path d="M7.600 7.900Q10.400 9.400 13.400 7.900L12 13.400Q9.200 15 6.400 13.400z" fill="#f8c41c"/></svg>
<span class="t" style="top:1052.5px;font-size:21px;line-height:25px;color:#fff;font-weight:bold;font-style:italic;left:26px;transform-origin:0 0;transform:scaleX(0.950);text-shadow:1px 2px 2px #401800;">пуск</span>
<svg style="left:108px;top:1056px" width="16" height="16" viewBox="0 0 16 16"><rect x="0" y="0" width="16" height="16" rx="1.2" fill="#ffff00"/><path d="M2.1 4.300L4.500 2.500H5.600V8H3.700V4.700L2.100 5.400z" fill="#f0101c"/><path d="M12 3.700C9.600 2.300 7.100 3.300 7.100 5.300C7.100 6.800 8.300 7.300 9.800 7.300H13.700" fill="none" stroke="#f0101c" stroke-width="1.500"/><path d="M3.500 9.800L5.500 14.300L7.500 9.800" fill="none" stroke="#b06008" stroke-width="1"/><ellipse cx="11" cy="10.900" rx="1.500" ry="1.200" fill="none" stroke="#b06008" stroke-width="1"/><ellipse cx="11" cy="13.200" rx="1.800" ry="1.300" fill="none" stroke="#b06008" stroke-width="1"/></svg>
<svg style="left:131.5px;top:1056.5px" width="15" height="15" viewBox="0 0 15 15"><defs><radialGradient id="r1c" cx="0.450" cy="0.300" r="0.750"><stop offset="0" stop-color="#fffbe0"/><stop offset="0.550" stop-color="#fde878"/><stop offset="1" stop-color="#f0b820"/></radialGradient></defs><circle cx="7.500" cy="7.500" r="7.300" fill="url(#r1c)"/><path d="M1.300 6.300L3.500 4.600H4.700V10H2.800V6.700L1.300 7.300z" fill="#ee1010"/><path d="M11 5.600C8.800 4.200 6.300 5.200 6.300 7.200C6.300 8.700 7.500 9.300 9 9.300H14.700" fill="none" stroke="#ee1010" stroke-width="1.600"/></svg>
<svg style="left:153.5px;top:1057.5px" width="17" height="14" viewBox="0 0 17 14"><defs><linearGradient id="mon" x1="0" y1="0" x2="1" y2="1"><stop offset="0" stop-color="#1a3c98"/><stop offset="1" stop-color="#6aaaf0"/></linearGradient></defs><rect x="0.500" y="0.500" width="16" height="13" fill="#b8c8e4" stroke="#8a9ab8" stroke-width=".8"/><rect x="1.500" y="1.500" width="14" height="8.500" fill="url(#mon)"/><rect x="1.500" y="10" width="14" height="2.500" fill="#2a2a2a"/><circle cx="3.800" cy="10.600" r="1.700" fill="#3a8ae0"/><circle cx="3.500" cy="10.200" r=".7" fill="#e04020"/><circle cx="4.300" cy="11" r=".6" fill="#f8d020"/></svg>
<span class="t" style="top:1049.5px;font-size:13px;line-height:17px;color:#fff;font-weight:bold;left:182px;transform-origin:0 0;transform:scaleX(0.970);">»</span>
<div style="left:201px;top:1053px;width:156px;height:24px;box-sizing:border-box;border-radius:3px;border:1px solid #2a2a2a;background:linear-gradient(#6c6c6c 0,#585858 10px,#3e3e3e 11px,#353535 22px);box-shadow:inset 0 1px 0 #7c7c7c,inset 1px 0 0 rgba(255,255,255,.08),inset -1px 0 0 rgba(255,255,255,.08);"></div>
<svg style="left:210px;top:1058px" width="16" height="16" viewBox="0 0 16 16"><circle cx="8" cy="8" r="7.500" fill="#e8e8e8"/><path d="M8 8L1.500 4.300A7.500 7.500 0 0 1 14.500 4.300z" fill="#e8402a"/><path d="M8 8L14.500 4.300A7.500 7.500 0 0 1 8 15.500z" fill="#f8c820"/><path d="M8 8L8 15.500A7.500 7.500 0 0 1 1.500 4.300z" fill="#3aa83a"/><circle cx="8" cy="8" r="3.400" fill="#fff"/><circle cx="8" cy="8" r="2.600" fill="#3a7ae8"/></svg>
<span class="t" style="top:1056.5px;font-size:13px;line-height:17px;color:#fff;left:228.3px;transform-origin:0 0;transform:scaleX(0.995);">Входящие - Почт...</span>
<div style="left:360px;top:1053px;width:158px;height:24px;box-sizing:border-box;border-radius:3px;border:1px solid #000;background:linear-gradient(#2c2c2c,#1c1c1c 10px,#141414);box-shadow:0 0 0 1px #585858;"></div>
<svg style="left:370px;top:1057px" width="16" height="16" viewBox="0 0 16 16"><rect x="0" y="0" width="16" height="16" rx="1.2" fill="#ffff00"/><path d="M2.1 4.300L4.500 2.500H5.600V8H3.700V4.700L2.100 5.400z" fill="#f0101c"/><path d="M12 3.700C9.600 2.300 7.100 3.300 7.100 5.300C7.100 6.800 8.300 7.300 9.800 7.300H13.700" fill="none" stroke="#f0101c" stroke-width="1.500"/><path d="M3.500 9.800L5.500 14.300L7.500 9.800" fill="none" stroke="#b06008" stroke-width="1"/><ellipse cx="11" cy="10.900" rx="1.500" ry="1.200" fill="none" stroke="#b06008" stroke-width="1"/><ellipse cx="11" cy="13.200" rx="1.800" ry="1.300" fill="none" stroke="#b06008" stroke-width="1"/></svg>
<span class="t" style="top:1056.5px;font-size:13px;line-height:17px;color:#fff;left:390.5px;transform-origin:0 0;transform:scaleX(0.967);">1С:Предприятие ...</span>
<div style="left:521px;top:1053px;width:156px;height:24px;box-sizing:border-box;border-radius:3px;border:1px solid #2a2a2a;background:linear-gradient(#6c6c6c 0,#585858 10px,#3e3e3e 11px,#353535 22px);box-shadow:inset 0 1px 0 #7c7c7c,inset 1px 0 0 rgba(255,255,255,.08),inset -1px 0 0 rgba(255,255,255,.08);"></div>
<svg style="left:530px;top:1057px" width="16" height="16" viewBox="0 0 16 16"><rect x="0" y="0" width="16" height="16" rx="1.2" fill="#ffff00"/><path d="M2.1 4.300L4.500 2.500H5.600V8H3.700V4.700L2.100 5.400z" fill="#f0101c"/><path d="M12 3.700C9.600 2.300 7.100 3.300 7.100 5.300C7.100 6.800 8.300 7.300 9.800 7.300H13.700" fill="none" stroke="#f0101c" stroke-width="1.500"/><path d="M3.500 9.800L5.500 14.300L7.500 9.800" fill="none" stroke="#b06008" stroke-width="1"/><ellipse cx="11" cy="10.900" rx="1.500" ry="1.200" fill="none" stroke="#b06008" stroke-width="1"/><ellipse cx="11" cy="13.200" rx="1.800" ry="1.300" fill="none" stroke="#b06008" stroke-width="1"/></svg>
<span class="t" style="top:1056.5px;font-size:13px;line-height:17px;color:#fff;left:549.5px;transform-origin:0 0;transform:scaleX(0.967);">1С:Предприятие ...</span>
<div style="left:681px;top:1053px;width:156px;height:24px;box-sizing:border-box;border-radius:3px;border:1px solid #2a2a2a;background:linear-gradient(#6c6c6c 0,#585858 10px,#3e3e3e 11px,#353535 22px);box-shadow:inset 0 1px 0 #7c7c7c,inset 1px 0 0 rgba(255,255,255,.08),inset -1px 0 0 rgba(255,255,255,.08);"></div>
<svg style="left:690px;top:1058px" width="14" height="16" viewBox="0 0 14 16"><path d="M1 1h6v14H1z" fill="#f4d878" stroke="#b89838" stroke-width=".6"/><path d="M7 2.500h6V15H7z" fill="#e8c050" stroke="#b89838" stroke-width=".6"/><rect x="6" y="1" width="1.600" height="14" fill="#a88828"/><rect x="9" y="9" width="2" height="4" fill="#5a9ae0"/></svg>
<span class="t" style="top:1056.5px;font-size:13px;line-height:17px;color:#fff;left:708.3px;transform-origin:0 0;transform:scaleX(1.035);">\\Server\папка д...</span>
<div style="left:841px;top:1053px;width:156px;height:24px;box-sizing:border-box;border-radius:3px;border:1px solid #2a2a2a;background:linear-gradient(#6c6c6c 0,#585858 10px,#3e3e3e 11px,#353535 22px);box-shadow:inset 0 1px 0 #7c7c7c,inset 1px 0 0 rgba(255,255,255,.08),inset -1px 0 0 rgba(255,255,255,.08);"></div>
<svg style="left:850px;top:1057px" width="15" height="15" viewBox="0 0 15 15"><defs><radialGradient id="r1c" cx="0.450" cy="0.300" r="0.750"><stop offset="0" stop-color="#fffbe0"/><stop offset="0.550" stop-color="#fde878"/><stop offset="1" stop-color="#f0b820"/></radialGradient></defs><circle cx="7.500" cy="7.500" r="7.300" fill="url(#r1c)"/><path d="M1.300 6.300L3.500 4.600H4.700V10H2.800V6.700L1.300 7.300z" fill="#ee1010"/><path d="M11 5.600C8.800 4.200 6.300 5.200 6.300 7.200C6.300 8.700 7.500 9.300 9 9.300H14.700" fill="none" stroke="#ee1010" stroke-width="1.600"/></svg>
<span class="t" style="top:1056.5px;font-size:13px;line-height:17px;color:#fff;left:869.3px;transform-origin:0 0;transform:scaleX(0.970);">1С:Предприятие ...</span>
<div style="left:1001px;top:1053px;width:156px;height:24px;box-sizing:border-box;border-radius:3px;border:1px solid #2a2a2a;background:linear-gradient(#6c6c6c 0,#585858 10px,#3e3e3e 11px,#353535 22px);box-shadow:inset 0 1px 0 #7c7c7c,inset 1px 0 0 rgba(255,255,255,.08),inset -1px 0 0 rgba(255,255,255,.08);"></div>
<svg style="left:1010px;top:1058px" width="16" height="16" viewBox="0 0 16 16"><rect x="0.500" y="0.500" width="15" height="15" fill="#fff" stroke="#c02020" stroke-width="1.400"/><rect x="3" y="3" width="10" height="10" fill="#e04040"/><path d="M4 12l3-5 2.500 3 1.500-2 2 4z" fill="#fff"/><circle cx="10.500" cy="5.500" r="1.300" fill="#fff"/></svg>
<span class="t" style="top:1056.5px;font-size:13px;line-height:17px;color:#fff;left:1028.3px;transform-origin:0 0;transform:scaleX(0.986);">Microsoft Office Pi...</span>
<div style="left:1820px;top:1050px;width:100px;height:28px;background:linear-gradient(#555 0,#404040 1px,#2e2e2e 14px,#1e1e1e 14px,#161616 28px);border-left:1px solid #000;box-sizing:border-box;"></div>
<div style="left:1794px;top:1057px;width:13px;height:16px;background:#c9c9c9;"></div>
<span class="t" style="top:1058.0px;font-size:12px;line-height:16px;color:#000;left:1794px;transform-origin:0 0;transform:scaleX(0.807);">RU</span>
<svg style="left:1813px;top:1057px" width="16" height="16" viewBox="0 0 16 16"><circle cx="8" cy="8" r="7.500" fill="#4a4a4a" stroke="#6a6a6a"/><path d="M10 4L6 8l4 4" stroke="#c9c9c9" stroke-width="1.500" fill="none"/></svg>
<svg style="left:1831px;top:1055px" width="15" height="15" viewBox="0 0 15 15"><path d="M7 0.500l3 2 4-.5-1 3.500 2 3-3.500 1-1 3.500-3-2-4 .5 1-3.500-2-3 3.500-1z" fill="#f4821e"/><text x="4.500" y="10" font-size="8" font-weight="bold" fill="#fff" font-family='"Liberation Sans",sans-serif'>a</text></svg>
<svg style="left:1849px;top:1057px" width="17" height="16" viewBox="0 0 17 16"><rect x="5.500" y="0.500" width="11" height="8" fill="#9ab8e8" stroke="#c9c9c9"/><rect x="7" y="2" width="8" height="5" fill="#2a5ad8"/><rect x="0.500" y="4.500" width="11" height="8" fill="#9ab8e8" stroke="#c9c9c9"/><rect x="2" y="6" width="8" height="5" fill="#2a6ae8"/><rect x="3" y="13.500" width="6" height="1.500" fill="#aaa"/></svg>
<span class="t" style="top:1055.5px;font-size:13px;line-height:17px;color:#fff;left:1873px;transform-origin:0 0;transform:scaleX(0.983);">12:07</span>
</div></body></html>
